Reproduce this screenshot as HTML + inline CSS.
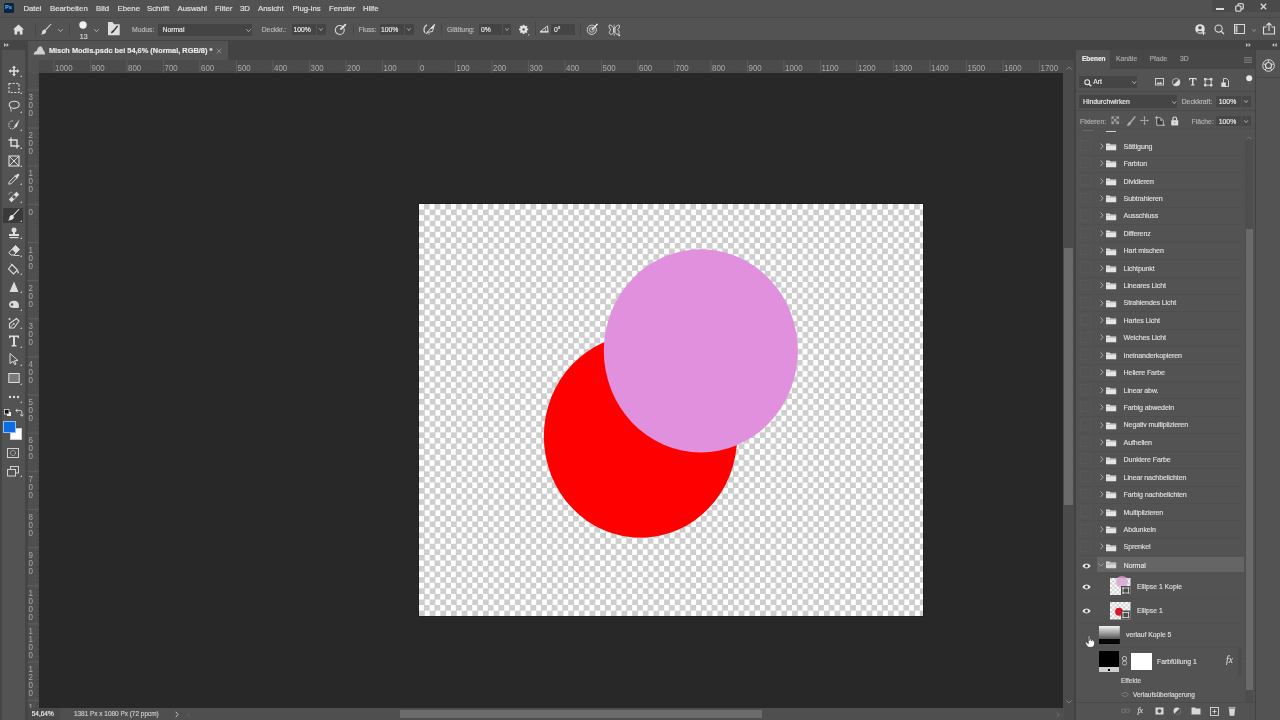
<!DOCTYPE html>
<html><head><meta charset="utf-8">
<style>
*{margin:0;padding:0;box-sizing:border-box}
html,body{width:1280px;height:720px;overflow:hidden;background:#282828;font-family:"Liberation Sans",sans-serif;color:#d6d6d6}
.a{position:absolute}
.t{position:absolute;white-space:nowrap;line-height:1;-webkit-text-stroke-width:0.18px}
#root{position:absolute;left:0;top:0;width:1280px;height:720px;will-change:transform}
svg{overflow:visible}
</style></head><body><div id="root">
<div class="a" style="left:0px;top:0px;width:1280px;height:17px;background:#525252;"></div>
<div class="a" style="left:0px;top:16.6px;width:1280px;height:1.4px;background:#484848;"></div>
<div class="a" style="left:0px;top:18px;width:1280px;height:22px;background:#535353;"></div>
<div class="a" style="left:0px;top:40px;width:1280px;height:20px;background:#434343;"></div>
<div class="a" style="left:0px;top:40px;width:28px;height:680px;background:#454545;"></div>
<div class="a" style="left:2px;top:49.6px;width:23px;height:670.4px;background:#535353;"></div>
<div class="a" style="left:27.5px;top:41px;width:200.5px;height:19px;background:#535353;"></div>
<div class="a" style="left:39px;top:73px;width:1024px;height:635px;background:#282828;"></div>
<div class="a" style="left:1063px;top:60px;width:11px;height:660px;background:#4b4b4b;"></div>
<div class="a" style="left:1064.2px;top:248px;width:8.7px;height:257px;background:#6b6b6b;"></div>
<div class="a" style="left:1074px;top:40px;width:2px;height:680px;background:#434343;"></div>
<div class="a" style="left:1076px;top:50px;width:179px;height:670px;background:#535353;"></div>
<div class="a" style="left:1255px;top:40px;width:1.3px;height:680px;background:#434343;"></div>
<div class="a" style="left:1256.3px;top:50px;width:23.7px;height:670px;background:#535353;"></div>
<div class="a" style="left:418.5px;top:203.75px;width:504.2px;height:412.35px;background:repeating-conic-gradient(#cecece 0 25%,#ffffff 0 50%) 0 0/10.667px 11.143px;box-shadow:0 0 0 0.8px #1e1e1e"></div>
<svg class="a" style="left:0;top:0" width="1280" height="720">
 <ellipse cx="640.5" cy="436.3" rx="96.7" ry="101.5" fill="#ff0000"/>
 <ellipse cx="700.8" cy="350.8" rx="97" ry="101.6" fill="#e190de"/>
</svg>
<div class="a" style="left:3.5px;top:2.5px;width:10.5px;height:10.5px;background:#0b2440;border-radius:1.5px"></div>
<div class="t" style="left:5px;top:5px;font-size:5.6px;color:#4aa8f0;font-weight:bold">Ps</div>
<div class="t" style="left:23.4px;top:5px;font-size:7.8px;color:#e0e0e0;">Datei</div>
<div class="t" style="left:50px;top:5px;font-size:7.8px;color:#e0e0e0;">Bearbeiten</div>
<div class="t" style="left:96px;top:5px;font-size:7.8px;color:#e0e0e0;">Bild</div>
<div class="t" style="left:117.5px;top:5px;font-size:7.8px;color:#e0e0e0;">Ebene</div>
<div class="t" style="left:147px;top:5px;font-size:7.8px;color:#e0e0e0;">Schrift</div>
<div class="t" style="left:177.5px;top:5px;font-size:7.8px;color:#e0e0e0;">Auswahl</div>
<div class="t" style="left:215px;top:5px;font-size:7.8px;color:#e0e0e0;">Filter</div>
<div class="t" style="left:240px;top:5px;font-size:7.8px;color:#e0e0e0;">3D</div>
<div class="t" style="left:258px;top:5px;font-size:7.8px;color:#e0e0e0;">Ansicht</div>
<div class="t" style="left:292.5px;top:5px;font-size:7.8px;color:#e0e0e0;">Plug-ins</div>
<div class="t" style="left:329px;top:5px;font-size:7.8px;color:#e0e0e0;">Fenster</div>
<div class="t" style="left:363px;top:5px;font-size:7.8px;color:#e0e0e0;">Hilfe</div>
<svg class="a" style="left:13px;top:23.5px;" width="11" height="11" viewBox="0 0 11 11"><path d="M5.5 0.5 L11 5.5 L9.5 5.5 L9.5 10.5 L6.8 10.5 L6.8 7.5 L4.2 7.5 L4.2 10.5 L1.5 10.5 L1.5 5.5 L0 5.5 Z" fill="#e0e0e0"/></svg>
<div class="a" style="left:35px;top:23px;width:1px;height:13px;background:#474747;"></div>
<svg class="a" style="left:41px;top:24px;" width="11" height="11" viewBox="0 0 11 11"><path d="M10.5 0.3 L5 6.2 L4.2 5.5 L9.8 -0.2 Z" fill="#dcdcdc"/><path d="M4.3 5.6 C2.5 5.2 1.3 6.5 1.2 8 C1.1 9.2 0.6 10 0 10.5 C2.5 10.6 4.6 9.8 5.3 7.6 Z" fill="#dcdcdc"/></svg>
<svg class="a" style="left:57.5px;top:28.5px;" width="5" height="3" viewBox="0 0 5 3"><path d="M0.3 0.3 L2.5 2.6 L4.7 0.3" stroke="#bdbdbd" stroke-width="0.9" fill="none"/></svg>
<div class="a" style="left:69px;top:23px;width:1px;height:13px;background:#474747;"></div>
<svg class="a" style="left:79.2px;top:20.6px;" width="8" height="8" viewBox="0 0 8 8"><circle cx="4" cy="4" r="3.7" fill="#f2f2f2"/></svg>
<div class="t" style="left:79.8px;top:32.6px;font-size:7px;color:#d4d4d4;">13</div>
<svg class="a" style="left:94px;top:28.5px;" width="5" height="3" viewBox="0 0 5 3"><path d="M0.3 0.3 L2.5 2.6 L4.7 0.3" stroke="#bdbdbd" stroke-width="0.9" fill="none"/></svg>
<svg class="a" style="left:108px;top:21.7px;" width="12" height="13.3" viewBox="0 0 12 13.3"><path d="M0 0 L4.5 0 L6 2.3 L11.7 2.3 L11.7 13.3 L0 13.3 Z" fill="#dedede"/><path d="M9.3 4.3 L5.3 9.2" stroke="#3a3a3a" stroke-width="1.4" stroke-linecap="round"/><path d="M5.2 8.5 C3.8 8.5 3.2 9.6 2.8 11.4 C4.5 11.2 5.8 10.6 6.1 9.3 Z" fill="#3a3a3a"/></svg>
<div class="t" style="left:132px;top:26.8px;font-size:6.8px;color:#b8b8b8;">Modus:</div>
<div class="a" style="left:158px;top:23.5px;width:94px;height:12px;background:#444444;"></div>
<div class="t" style="left:162.5px;top:26.8px;font-size:6.8px;color:#e6e6e6;">Normal</div>
<svg class="a" style="left:245.5px;top:28.7px;" width="5" height="3" viewBox="0 0 5 3"><path d="M0.3 0.3 L2.5 2.6 L4.7 0.3" stroke="#bdbdbd" stroke-width="0.9" fill="none"/></svg>
<div class="t" style="left:261.7px;top:26.8px;font-size:6.8px;color:#b8b8b8;">Deckkr.:</div>
<div class="a" style="left:291.5px;top:23.5px;width:24px;height:11px;background:#444444;"></div>
<div class="a" style="left:316.5px;top:23.5px;width:9px;height:11px;background:#444444;"></div>
<div class="t" style="left:293.5px;top:26.8px;font-size:6.8px;color:#e6e6e6;">100%</div>
<svg class="a" style="left:318.5px;top:28.2px;" width="4" height="3" viewBox="0 0 4 3"><path d="M0.3 0.3 L2.0 2.6 L3.7 0.3" stroke="#b0b0b0" stroke-width="0.9" fill="none"/></svg>
<svg class="a" style="left:334px;top:23px;" width="13" height="13" viewBox="0 0 13 13"><circle cx="5.75" cy="7" r="4.5" stroke="#d4d4d4" stroke-width="1.1" fill="none"/><path d="M6.8 6.2 L11.4 1.6" stroke="#e4e4e4" stroke-width="1.7" stroke-linecap="round"/></svg>
<div class="a" style="left:353px;top:23px;width:1px;height:13px;background:#474747;"></div>
<div class="t" style="left:358.5px;top:26.8px;font-size:6.8px;color:#b8b8b8;">Fluss:</div>
<div class="a" style="left:379.5px;top:23.5px;width:24px;height:11px;background:#444444;"></div>
<div class="a" style="left:405px;top:23.5px;width:9px;height:11px;background:#444444;"></div>
<div class="t" style="left:381px;top:26.8px;font-size:6.8px;color:#e6e6e6;">100%</div>
<svg class="a" style="left:407px;top:28.2px;" width="4" height="3" viewBox="0 0 4 3"><path d="M0.3 0.3 L2.0 2.6 L3.7 0.3" stroke="#b0b0b0" stroke-width="0.9" fill="none"/></svg>
<svg class="a" style="left:421px;top:22px;" width="15" height="14" viewBox="0 0 15 14"><path d="M6 2.8 C2.5 4.5 2.3 8.5 4 10.8" stroke="#d4d4d4" stroke-width="1.3" fill="none"/><path d="M13.5 2.3 L6 10.5 L11.5 9.5 Z" stroke="#dcdcdc" stroke-width="1" fill="none"/><path d="M13.5 2.3 L9 7 L12 6.5 Z" fill="#e6e6e6"/><circle cx="5.5" cy="11.5" r="0.8" fill="#d0d0d0"/><circle cx="8" cy="12" r="0.7" fill="#c0c0c0"/></svg>
<div class="a" style="left:441px;top:23px;width:1px;height:13px;background:#474747;"></div>
<div class="t" style="left:447px;top:26.8px;font-size:6.8px;color:#b8b8b8;">Glättung:</div>
<div class="a" style="left:478.5px;top:23.5px;width:23.5px;height:11px;background:#444444;"></div>
<div class="a" style="left:503px;top:23.5px;width:8px;height:11px;background:#444444;"></div>
<div class="t" style="left:481px;top:26.8px;font-size:6.8px;color:#e6e6e6;">0%</div>
<svg class="a" style="left:505px;top:28.2px;" width="4" height="3" viewBox="0 0 4 3"><path d="M0.3 0.3 L2.0 2.6 L3.7 0.3" stroke="#b0b0b0" stroke-width="0.9" fill="none"/></svg>
<svg class="a" style="left:518px;top:23.5px;" width="12" height="12" viewBox="0 0 12 12"><g transform="translate(5.6,5.4)"><circle r="3.3" fill="#e4e4e4"/><circle r="1.2" fill="#4a4a4a"/><rect x="-0.9" y="-4.6" width="1.8" height="2.2" fill="#e4e4e4" transform="rotate(0)"/><rect x="-0.9" y="-4.6" width="1.8" height="2.2" fill="#e4e4e4" transform="rotate(45)"/><rect x="-0.9" y="-4.6" width="1.8" height="2.2" fill="#e4e4e4" transform="rotate(90)"/><rect x="-0.9" y="-4.6" width="1.8" height="2.2" fill="#e4e4e4" transform="rotate(135)"/><rect x="-0.9" y="-4.6" width="1.8" height="2.2" fill="#e4e4e4" transform="rotate(180)"/><rect x="-0.9" y="-4.6" width="1.8" height="2.2" fill="#e4e4e4" transform="rotate(225)"/><rect x="-0.9" y="-4.6" width="1.8" height="2.2" fill="#e4e4e4" transform="rotate(270)"/><rect x="-0.9" y="-4.6" width="1.8" height="2.2" fill="#e4e4e4" transform="rotate(315)"/></g><path d="M9.8 10.6 L11.6 10.6 L10.7 11.8 Z" fill="#e0e0e0"/></svg>
<div class="a" style="left:535px;top:21px;width:1px;height:15px;background:#474747;"></div>
<svg class="a" style="left:539px;top:24.5px;" width="11" height="8" viewBox="0 0 11 8"><path d="M1 6.8 L8.5 1 L9 6.8 Z" stroke="#d8d8d8" stroke-width="1" fill="none"/><path d="M1 6.8 L9.5 6.8" stroke="#d8d8d8" stroke-width="1.4"/><path d="M5.8 3.3 Q7 5 6.5 6.8" stroke="#d8d8d8" stroke-width="0.8" fill="none"/></svg>
<div class="a" style="left:551px;top:23.5px;width:23.5px;height:11px;background:#444444;"></div>
<div class="t" style="left:554px;top:26.8px;font-size:6.8px;color:#e6e6e6;">0°</div>
<div class="a" style="left:580px;top:23px;width:1px;height:13px;background:#474747;"></div>
<svg class="a" style="left:585.5px;top:22.5px;" width="13" height="13" viewBox="0 0 13 13"><circle cx="5.8" cy="6.8" r="4.6" stroke="#d4d4d4" stroke-width="1" fill="none"/><circle cx="5.8" cy="6.8" r="2.4" stroke="#d4d4d4" stroke-width="0.9" fill="none"/><path d="M6.2 6.4 L11.2 1.2" stroke="#e4e4e4" stroke-width="1.5" stroke-linecap="round"/></svg>
<svg class="a" style="left:607.5px;top:23.5px;" width="13" height="13" viewBox="0 0 13 13"><path d="M6.25 0.5 L6.25 12" stroke="#c8c8c8" stroke-width="0.7"/><path d="M5.5 4 C4 1 1 0.5 1 1.5 C1 3.5 1.5 5 3 5.8 C1.5 6.5 1 8 1.5 9.5 C2.5 11 4.5 10.5 5.5 8.5 Z M7 4 C8.5 1 11.5 0.5 11.5 1.5 C11.5 3.5 11 5 9.5 5.8 C11 6.5 11.5 8 11 9.5 C10 11 8 10.5 7 8.5 Z" stroke="#d4d4d4" stroke-width="1" fill="none"/><circle cx="11.2" cy="11.2" r="1" fill="#e4e4e4"/></svg>
<svg class="a" style="left:1195px;top:24px;" width="11" height="11" viewBox="0 0 11 11"><circle cx="5" cy="5" r="4.8" fill="#e0e0e0"/><circle cx="5" cy="3.8" r="1.8" fill="#535353"/><path d="M1.6 8.6 C2.5 6.5 7.5 6.5 8.4 8.6" fill="#535353"/><path d="M8.5 7 L8.5 11 M6.5 9 L10.5 9" stroke="#e0e0e0" stroke-width="1"/></svg>
<svg class="a" style="left:1214px;top:24px;" width="11" height="11" viewBox="0 0 11 11"><circle cx="4.6" cy="4.6" r="3.6" stroke="#dadada" stroke-width="1.1" fill="none"/><path d="M7.2 7.2 L10 10" stroke="#dadada" stroke-width="1.3"/></svg>
<svg class="a" style="left:1234px;top:24px;" width="11" height="10" viewBox="0 0 11 10"><rect x="0.5" y="0.5" width="10" height="9" stroke="#dadada" stroke-width="1" fill="none"/><rect x="1.5" y="1.5" width="2" height="7" fill="#bdbdbd"/></svg>
<svg class="a" style="left:1252px;top:29px;" width="4" height="3" viewBox="0 0 4 3"><path d="M0.3 0.3 L2.0 2.6 L3.7 0.3" stroke="#9a9a9a" stroke-width="0.9" fill="none"/></svg>
<svg class="a" style="left:1263px;top:22px;" width="12" height="13" viewBox="0 0 12 13"><path d="M3.5 5 L0.5 5 L0.5 12 L11.5 12 L11.5 5 L8.5 5" stroke="#dedede" stroke-width="1.1" fill="none"/><path d="M6 9 L6 1 M3.5 3.5 L6 1 L8.5 3.5" stroke="#dedede" stroke-width="1.1" fill="none"/></svg>
<div class="a" style="left:1212px;top:0px;width:68px;height:12px;background:#4a4a4a;"></div>
<div class="a" style="left:1216.2px;top:7.8px;width:7.5px;height:2px;background:#d8d8d8;"></div>
<svg class="a" style="left:1234.5px;top:3px;" width="9" height="9" viewBox="0 0 9 9"><rect x="3" y="0.7" width="5.3" height="5.3" stroke="#d0d0d0" stroke-width="1.3" fill="none" rx="1.2"/><rect x="0.7" y="2.8" width="5.3" height="5.3" stroke="#d0d0d0" stroke-width="1.3" fill="#4a4a4a" rx="1.2"/></svg>
<svg class="a" style="left:1260px;top:3.2px;" width="7" height="7" viewBox="0 0 7 7"><path d="M0.8 0.8 L6.2 6.2 M6.2 0.8 L0.8 6.2" stroke="#d4d4d4" stroke-width="1.4"/></svg>
<svg class="a" style="left:33px;top:45px;" width="12.5" height="10" viewBox="0 0 12.5 10"><path d="M0.5 9.5 L1.2 7.8 C1.8 6.5 3 6 3.8 6 C4.3 3.5 5.8 1 7.5 1.2 C9 1.4 9.8 3 10 4.8 C11 5.3 12 7.5 12.2 9.5 Z" fill="#cfcfcf"/></svg>
<div class="t" style="left:48.9px;top:47px;font-size:7.4px;color:#e8e8e8;font-weight:bold">Misch Modis.psdc bei 54,6% (Normal, RGB/8) *</div>
<svg class="a" style="left:215.5px;top:48px;" width="6" height="6" viewBox="0 0 6 6"><path d="M0.7 0.7 L5.3 5.3 M5.3 0.7 L0.7 5.3" stroke="#9a9a9a" stroke-width="0.8"/></svg>
<svg class="a" style="left:4px;top:42.8px;" width="5" height="4" viewBox="0 0 5 4"><path d="M0 0 L2.2 2 L0 4 Z M2.6 0 L4.8 2 L2.6 4 Z" fill="#c8c8c8"/></svg>
<div class="a" style="left:3px;top:207.5px;width:20px;height:15.5px;background:#3a3a3a;"></div>
<svg class="a" style="left:7.5px;top:64.5px;" width="12" height="12" viewBox="0 0 12 12"><path d="M6 0.5 L8 3 L6.8 3 L6.8 5.2 L9 5.2 L9 4 L11.5 6 L9 8 L9 6.8 L6.8 6.8 L6.8 9 L8 9 L6 11.5 L4 9 L5.2 9 L5.2 6.8 L3 6.8 L3 8 L0.5 6 L3 4 L3 5.2 L5.2 5.2 L5.2 3 L4 3 Z" fill="#dcdcdc"/></svg>
<svg class="a" style="left:19.5px;top:75.0px;" width="2" height="2" viewBox="0 0 2 2"><path d="M2 0 L2 2 L0 2 Z" fill="#bdbdbd"/></svg>
<svg class="a" style="left:7.5px;top:81.5px;" width="12" height="12" viewBox="0 0 12 12"><rect x="1" y="1.5" width="10" height="9" stroke="#dcdcdc" stroke-width="1.1" fill="none" stroke-dasharray="2.2 1.4"/></svg>
<svg class="a" style="left:19.5px;top:92.0px;" width="2" height="2" viewBox="0 0 2 2"><path d="M2 0 L2 2 L0 2 Z" fill="#bdbdbd"/></svg>
<svg class="a" style="left:7.5px;top:100.0px;" width="12" height="12" viewBox="0 0 12 12"><ellipse cx="6.2" cy="4.8" rx="5" ry="3.6" stroke="#dcdcdc" stroke-width="1.1" fill="none"/><path d="M2.8 7.5 C2.2 9 3.5 9.5 3 11.5" stroke="#dcdcdc" stroke-width="1" fill="none"/></svg>
<svg class="a" style="left:19.5px;top:110.5px;" width="2" height="2" viewBox="0 0 2 2"><path d="M2 0 L2 2 L0 2 Z" fill="#bdbdbd"/></svg>
<svg class="a" style="left:7.5px;top:118.5px;" width="12" height="12" viewBox="0 0 12 12"><path d="M5 2 C1.5 1 0 5 1.2 8 C2.2 10.2 5 10.5 6 9" stroke="#dcdcdc" stroke-width="0.9" fill="none" stroke-dasharray="1.5 1"/><path d="M11.5 0.5 L7 6 L5.5 10 L9 7.2 Z" fill="#dcdcdc"/></svg>
<svg class="a" style="left:19.5px;top:129.0px;" width="2" height="2" viewBox="0 0 2 2"><path d="M2 0 L2 2 L0 2 Z" fill="#bdbdbd"/></svg>
<svg class="a" style="left:7.5px;top:136.5px;" width="12" height="12" viewBox="0 0 12 12"><path d="M3 0.5 L3 9 L11.5 9 M0.5 3 L9 3 L9 11.5" stroke="#dcdcdc" stroke-width="1.4" fill="none"/></svg>
<svg class="a" style="left:19.5px;top:147.0px;" width="2" height="2" viewBox="0 0 2 2"><path d="M2 0 L2 2 L0 2 Z" fill="#bdbdbd"/></svg>
<svg class="a" style="left:7.5px;top:154.5px;" width="12" height="12" viewBox="0 0 12 12"><rect x="1" y="1" width="10" height="10" stroke="#dcdcdc" stroke-width="1.1" fill="none"/><path d="M1 1 L11 11 M11 1 L1 11" stroke="#dcdcdc" stroke-width="1"/></svg>
<svg class="a" style="left:19.5px;top:165.0px;" width="2" height="2" viewBox="0 0 2 2"><path d="M2 0 L2 2 L0 2 Z" fill="#bdbdbd"/></svg>
<svg class="a" style="left:7.5px;top:172.5px;" width="12" height="12" viewBox="0 0 12 12"><path d="M0.8 11.2 L1.2 9 L7 3.2 L8.8 5 L3 10.8 Z" stroke="#dcdcdc" stroke-width="1" fill="none"/><path d="M6.5 2.8 L9.2 5.5 L10 4.7 L9.5 4.2 L11 2.7 C12 1.5 10.5 0 9.3 1 L7.8 2.5 L7.3 2 Z" fill="#dcdcdc"/></svg>
<svg class="a" style="left:19.5px;top:183.0px;" width="2" height="2" viewBox="0 0 2 2"><path d="M2 0 L2 2 L0 2 Z" fill="#bdbdbd"/></svg>
<svg class="a" style="left:7.5px;top:190.5px;" width="12" height="12" viewBox="0 0 12 12"><path d="M8.5 0.8 L11.2 3.5 L3.5 11.2 L0.8 8.5 Z" fill="#dcdcdc"/><rect x="4.5" y="4.5" width="3" height="3" transform="rotate(45 6 6)" fill="#535353"/><path d="M1 3.5 C1 1 3.5 0.5 4.5 2" stroke="#dcdcdc" stroke-width="0.8" fill="none" stroke-dasharray="1 0.8"/></svg>
<svg class="a" style="left:19.5px;top:201.0px;" width="2" height="2" viewBox="0 0 2 2"><path d="M2 0 L2 2 L0 2 Z" fill="#bdbdbd"/></svg>
<svg class="a" style="left:7.5px;top:209.0px;" width="12" height="12" viewBox="0 0 12 12"><path d="M11.5 0.3 L5.6 6.8 L4.8 6 L10.8 -0.3 Z" fill="#e6e6e6"/><path d="M4.9 6.1 C2.8 5.7 1.5 7.1 1.4 8.7 C1.3 10 0.7 10.9 0 11.4 C2.8 11.5 5.2 10.6 6 8.2 Z" fill="#e6e6e6"/></svg>
<svg class="a" style="left:19.5px;top:219.5px;" width="2" height="2" viewBox="0 0 2 2"><path d="M2 0 L2 2 L0 2 Z" fill="#bdbdbd"/></svg>
<svg class="a" style="left:7.5px;top:226.5px;" width="12" height="12" viewBox="0 0 12 12"><circle cx="6" cy="3" r="2.5" fill="#dcdcdc"/><rect x="5" y="4" width="2" height="3" fill="#dcdcdc"/><path d="M1 7 L11 7 L11 9 L1 9 Z" fill="#dcdcdc"/><rect x="1.5" y="10" width="9" height="1.2" fill="#dcdcdc"/></svg>
<svg class="a" style="left:19.5px;top:237.0px;" width="2" height="2" viewBox="0 0 2 2"><path d="M2 0 L2 2 L0 2 Z" fill="#bdbdbd"/></svg>
<svg class="a" style="left:7.5px;top:244.5px;" width="12" height="12" viewBox="0 0 12 12"><path d="M7.5 0.5 L11.5 4.5 L6 10 L3 10 L0.8 7.8 Z" stroke="#dcdcdc" stroke-width="1" fill="none"/><path d="M7.5 0.5 L11.5 4.5 L7.8 8.2 L3.8 4.2 Z" fill="#dcdcdc"/><path d="M6 10.5 L11.5 10.5" stroke="#dcdcdc" stroke-width="0.9"/></svg>
<svg class="a" style="left:19.5px;top:255.0px;" width="2" height="2" viewBox="0 0 2 2"><path d="M2 0 L2 2 L0 2 Z" fill="#bdbdbd"/></svg>
<svg class="a" style="left:7.5px;top:262.5px;" width="12" height="12" viewBox="0 0 12 12"><path d="M4 1.5 L9.5 7 L5.5 11 L0.5 6 Z" stroke="#dcdcdc" stroke-width="1.1" fill="none"/><path d="M2.5 0.5 L6 4" stroke="#dcdcdc" stroke-width="0.9"/><path d="M9.5 7 C10.5 8 11.5 9.5 10.5 10.5 C9.8 11 9 10 9.5 7 Z" fill="#dcdcdc"/></svg>
<svg class="a" style="left:19.5px;top:273.0px;" width="2" height="2" viewBox="0 0 2 2"><path d="M2 0 L2 2 L0 2 Z" fill="#bdbdbd"/></svg>
<svg class="a" style="left:7.5px;top:280.5px;" width="12" height="12" viewBox="0 0 12 12"><path d="M6 0.5 L10.5 11 L1.5 11 Z" fill="#dcdcdc"/></svg>
<svg class="a" style="left:19.5px;top:291.0px;" width="2" height="2" viewBox="0 0 2 2"><path d="M2 0 L2 2 L0 2 Z" fill="#bdbdbd"/></svg>
<svg class="a" style="left:7.5px;top:298.5px;" width="12" height="12" viewBox="0 0 12 12"><path d="M1 5.5 C1 2 5 1 8 2 C10.5 3 11.5 6 10.5 9 L6 9 C3 9 1 8 1 5.5 Z" fill="#dcdcdc"/><circle cx="4" cy="5.5" r="1.3" fill="#535353"/></svg>
<svg class="a" style="left:19.5px;top:309.0px;" width="2" height="2" viewBox="0 0 2 2"><path d="M2 0 L2 2 L0 2 Z" fill="#bdbdbd"/></svg>
<svg class="a" style="left:7.5px;top:316.5px;" width="12" height="12" viewBox="0 0 12 12"><path d="M8.5 1.5 L11 4 L9.5 6 L6 11 L1.5 11 L1.5 6.5 L6.5 3 Z" stroke="#dcdcdc" stroke-width="1.1" fill="none"/><path d="M2 10.5 L5.5 7" stroke="#dcdcdc" stroke-width="0.8"/><circle cx="5.8" cy="6.8" r="0.9" fill="#dcdcdc"/><circle cx="1.5" cy="2" r="1" fill="#dcdcdc"/></svg>
<svg class="a" style="left:19.5px;top:327.0px;" width="2" height="2" viewBox="0 0 2 2"><path d="M2 0 L2 2 L0 2 Z" fill="#bdbdbd"/></svg>
<svg class="a" style="left:7.5px;top:335.0px;" width="12" height="12" viewBox="0 0 12 12"><path d="M1 0.5 L11 0.5 L11 3.3 L9.8 3.3 L9.5 2 L7 2 L7 10 L8.5 10.3 L8.5 11.5 L3.5 11.5 L3.5 10.3 L5 10 L5 2 L2.5 2 L2.2 3.3 L1 3.3 Z" fill="#dcdcdc"/></svg>
<svg class="a" style="left:19.5px;top:345.5px;" width="2" height="2" viewBox="0 0 2 2"><path d="M2 0 L2 2 L0 2 Z" fill="#bdbdbd"/></svg>
<svg class="a" style="left:7.5px;top:353.0px;" width="12" height="12" viewBox="0 0 12 12"><path d="M2 0.5 L10 7.5 L6.5 7.8 L8 11 L6.6 11.6 L5.1 8.3 L2 10.5 Z" stroke="#dcdcdc" stroke-width="1" fill="none"/></svg>
<svg class="a" style="left:19.5px;top:363.5px;" width="2" height="2" viewBox="0 0 2 2"><path d="M2 0 L2 2 L0 2 Z" fill="#bdbdbd"/></svg>
<svg class="a" style="left:7.5px;top:372.0px;" width="12" height="12" viewBox="0 0 12 12"><rect x="0.8" y="1.5" width="10.4" height="9" stroke="#dcdcdc" stroke-width="1" fill="#7a7a7a"/></svg>
<svg class="a" style="left:19.5px;top:382.5px;" width="2" height="2" viewBox="0 0 2 2"><path d="M2 0 L2 2 L0 2 Z" fill="#bdbdbd"/></svg>
<svg class="a" style="left:7.5px;top:390.5px;" width="12" height="12" viewBox="0 0 12 12"><circle cx="2" cy="6" r="1.2" fill="#dcdcdc"/><circle cx="6" cy="6" r="1.2" fill="#dcdcdc"/><circle cx="10" cy="6" r="1.2" fill="#dcdcdc"/></svg>
<svg class="a" style="left:19.5px;top:401.0px;" width="2" height="2" viewBox="0 0 2 2"><path d="M2 0 L2 2 L0 2 Z" fill="#bdbdbd"/></svg>
<svg class="a" style="left:4px;top:409px;" width="8" height="8" viewBox="0 0 8 8"><rect x="2.5" y="2.5" width="5" height="5" fill="#f0f0f0" stroke="#222" stroke-width="0.6"/><rect x="0.5" y="0.5" width="4.5" height="4.5" fill="#111" stroke="#e0e0e0" stroke-width="0.8"/></svg>
<svg class="a" style="left:15px;top:408px;" width="8" height="9" viewBox="0 0 8 9"><path d="M1 2.5 L5.5 2.5 Q6.8 2.5 6.8 4 L6.8 8" stroke="#d8d8d8" stroke-width="0.9" fill="none"/><path d="M2.5 0.8 L0.8 2.5 L2.5 4.2 M5 6.5 L6.8 8.3 L8.5 6.5" stroke="#d8d8d8" stroke-width="0.9" fill="none"/></svg>
<div class="a" style="left:10px;top:428px;width:12px;height:12px;background:#ffffff;border:1px solid #cfcfcf"></div>
<div class="a" style="left:3px;top:420.8px;width:12.5px;height:12.5px;background:#0b6ce6;border:1px solid #8cc0f0"></div>
<svg class="a" style="left:7px;top:448px;" width="12" height="10" viewBox="0 0 12 10"><rect x="0.5" y="0.5" width="11" height="9" stroke="#d0d0d0" stroke-width="1" fill="none"/><circle cx="6" cy="5" r="2.5" stroke="#d0d0d0" stroke-width="0.9" fill="none" stroke-dasharray="1.2 0.8"/></svg>
<svg class="a" style="left:7px;top:466px;" width="12" height="11" viewBox="0 0 12 11"><rect x="3.5" y="0.5" width="8" height="6.5" stroke="#d0d0d0" stroke-width="1" fill="none"/><rect x="0.5" y="3.5" width="8" height="6.5" stroke="#d0d0d0" stroke-width="1" fill="#535353"/></svg>
<svg class="a" style="left:19.5px;top:475px;" width="2" height="2" viewBox="0 0 2 2"><path d="M2 0 L2 2 L0 2 Z" fill="#bdbdbd"/></svg>
<div class="a" style="left:39px;top:60px;width:1024px;height:12.5px;background:#4b4b4b;"></div>
<div class="a" style="left:27.5px;top:72.5px;width:11px;height:635.5px;background:#4f4f4f;"></div>
<div class="a" style="left:27.5px;top:60px;width:11px;height:12.5px;background:#525252;"></div>
<svg class="a" style="left:0;top:0" width="1280" height="720"><rect x="0" y="0" width="1280" height="720" fill="none"/><path d="M39.30 71.0 L39.30 72.5" stroke="#3f3f3f" stroke-width="0.7"/><path d="M42.95 71.0 L42.95 72.5" stroke="#3f3f3f" stroke-width="0.7"/><path d="M46.60 71.0 L46.60 72.5" stroke="#3f3f3f" stroke-width="0.7"/><path d="M50.25 71.0 L50.25 72.5" stroke="#3f3f3f" stroke-width="0.7"/><path d="M53.90 60 L53.90 72.5" stroke="#656565" stroke-width="0.8"/><text x="55.10" y="0" transform="translate(0 71.2) scale(1 1.22)" font-size="7.9" fill="#aaaaaa" font-family="Liberation Sans">1000</text><path d="M57.55 71.0 L57.55 72.5" stroke="#3f3f3f" stroke-width="0.7"/><path d="M61.20 71.0 L61.20 72.5" stroke="#3f3f3f" stroke-width="0.7"/><path d="M64.85 71.0 L64.85 72.5" stroke="#3f3f3f" stroke-width="0.7"/><path d="M68.50 71.0 L68.50 72.5" stroke="#3f3f3f" stroke-width="0.7"/><path d="M72.15 70.0 L72.15 72.5" stroke="#3f3f3f" stroke-width="0.7"/><path d="M75.80 71.0 L75.80 72.5" stroke="#3f3f3f" stroke-width="0.7"/><path d="M79.45 71.0 L79.45 72.5" stroke="#3f3f3f" stroke-width="0.7"/><path d="M83.10 71.0 L83.10 72.5" stroke="#3f3f3f" stroke-width="0.7"/><path d="M86.75 71.0 L86.75 72.5" stroke="#3f3f3f" stroke-width="0.7"/><path d="M90.40 60 L90.40 72.5" stroke="#656565" stroke-width="0.8"/><text x="91.60" y="0" transform="translate(0 71.2) scale(1 1.22)" font-size="7.9" fill="#aaaaaa" font-family="Liberation Sans">900</text><path d="M94.05 71.0 L94.05 72.5" stroke="#3f3f3f" stroke-width="0.7"/><path d="M97.70 71.0 L97.70 72.5" stroke="#3f3f3f" stroke-width="0.7"/><path d="M101.35 71.0 L101.35 72.5" stroke="#3f3f3f" stroke-width="0.7"/><path d="M105.00 71.0 L105.00 72.5" stroke="#3f3f3f" stroke-width="0.7"/><path d="M108.65 70.0 L108.65 72.5" stroke="#3f3f3f" stroke-width="0.7"/><path d="M112.30 71.0 L112.30 72.5" stroke="#3f3f3f" stroke-width="0.7"/><path d="M115.95 71.0 L115.95 72.5" stroke="#3f3f3f" stroke-width="0.7"/><path d="M119.60 71.0 L119.60 72.5" stroke="#3f3f3f" stroke-width="0.7"/><path d="M123.25 71.0 L123.25 72.5" stroke="#3f3f3f" stroke-width="0.7"/><path d="M126.90 60 L126.90 72.5" stroke="#656565" stroke-width="0.8"/><text x="128.10" y="0" transform="translate(0 71.2) scale(1 1.22)" font-size="7.9" fill="#aaaaaa" font-family="Liberation Sans">800</text><path d="M130.55 71.0 L130.55 72.5" stroke="#3f3f3f" stroke-width="0.7"/><path d="M134.20 71.0 L134.20 72.5" stroke="#3f3f3f" stroke-width="0.7"/><path d="M137.85 71.0 L137.85 72.5" stroke="#3f3f3f" stroke-width="0.7"/><path d="M141.50 71.0 L141.50 72.5" stroke="#3f3f3f" stroke-width="0.7"/><path d="M145.15 70.0 L145.15 72.5" stroke="#3f3f3f" stroke-width="0.7"/><path d="M148.80 71.0 L148.80 72.5" stroke="#3f3f3f" stroke-width="0.7"/><path d="M152.45 71.0 L152.45 72.5" stroke="#3f3f3f" stroke-width="0.7"/><path d="M156.10 71.0 L156.10 72.5" stroke="#3f3f3f" stroke-width="0.7"/><path d="M159.75 71.0 L159.75 72.5" stroke="#3f3f3f" stroke-width="0.7"/><path d="M163.40 60 L163.40 72.5" stroke="#656565" stroke-width="0.8"/><text x="164.60" y="0" transform="translate(0 71.2) scale(1 1.22)" font-size="7.9" fill="#aaaaaa" font-family="Liberation Sans">700</text><path d="M167.05 71.0 L167.05 72.5" stroke="#3f3f3f" stroke-width="0.7"/><path d="M170.70 71.0 L170.70 72.5" stroke="#3f3f3f" stroke-width="0.7"/><path d="M174.35 71.0 L174.35 72.5" stroke="#3f3f3f" stroke-width="0.7"/><path d="M178.00 71.0 L178.00 72.5" stroke="#3f3f3f" stroke-width="0.7"/><path d="M181.65 70.0 L181.65 72.5" stroke="#3f3f3f" stroke-width="0.7"/><path d="M185.30 71.0 L185.30 72.5" stroke="#3f3f3f" stroke-width="0.7"/><path d="M188.95 71.0 L188.95 72.5" stroke="#3f3f3f" stroke-width="0.7"/><path d="M192.60 71.0 L192.60 72.5" stroke="#3f3f3f" stroke-width="0.7"/><path d="M196.25 71.0 L196.25 72.5" stroke="#3f3f3f" stroke-width="0.7"/><path d="M199.90 60 L199.90 72.5" stroke="#656565" stroke-width="0.8"/><text x="201.10" y="0" transform="translate(0 71.2) scale(1 1.22)" font-size="7.9" fill="#aaaaaa" font-family="Liberation Sans">600</text><path d="M203.55 71.0 L203.55 72.5" stroke="#3f3f3f" stroke-width="0.7"/><path d="M207.20 71.0 L207.20 72.5" stroke="#3f3f3f" stroke-width="0.7"/><path d="M210.85 71.0 L210.85 72.5" stroke="#3f3f3f" stroke-width="0.7"/><path d="M214.50 71.0 L214.50 72.5" stroke="#3f3f3f" stroke-width="0.7"/><path d="M218.15 70.0 L218.15 72.5" stroke="#3f3f3f" stroke-width="0.7"/><path d="M221.80 71.0 L221.80 72.5" stroke="#3f3f3f" stroke-width="0.7"/><path d="M225.45 71.0 L225.45 72.5" stroke="#3f3f3f" stroke-width="0.7"/><path d="M229.10 71.0 L229.10 72.5" stroke="#3f3f3f" stroke-width="0.7"/><path d="M232.75 71.0 L232.75 72.5" stroke="#3f3f3f" stroke-width="0.7"/><path d="M236.40 60 L236.40 72.5" stroke="#656565" stroke-width="0.8"/><text x="237.60" y="0" transform="translate(0 71.2) scale(1 1.22)" font-size="7.9" fill="#aaaaaa" font-family="Liberation Sans">500</text><path d="M240.05 71.0 L240.05 72.5" stroke="#3f3f3f" stroke-width="0.7"/><path d="M243.70 71.0 L243.70 72.5" stroke="#3f3f3f" stroke-width="0.7"/><path d="M247.35 71.0 L247.35 72.5" stroke="#3f3f3f" stroke-width="0.7"/><path d="M251.00 71.0 L251.00 72.5" stroke="#3f3f3f" stroke-width="0.7"/><path d="M254.65 70.0 L254.65 72.5" stroke="#3f3f3f" stroke-width="0.7"/><path d="M258.30 71.0 L258.30 72.5" stroke="#3f3f3f" stroke-width="0.7"/><path d="M261.95 71.0 L261.95 72.5" stroke="#3f3f3f" stroke-width="0.7"/><path d="M265.60 71.0 L265.60 72.5" stroke="#3f3f3f" stroke-width="0.7"/><path d="M269.25 71.0 L269.25 72.5" stroke="#3f3f3f" stroke-width="0.7"/><path d="M272.90 60 L272.90 72.5" stroke="#656565" stroke-width="0.8"/><text x="274.10" y="0" transform="translate(0 71.2) scale(1 1.22)" font-size="7.9" fill="#aaaaaa" font-family="Liberation Sans">400</text><path d="M276.55 71.0 L276.55 72.5" stroke="#3f3f3f" stroke-width="0.7"/><path d="M280.20 71.0 L280.20 72.5" stroke="#3f3f3f" stroke-width="0.7"/><path d="M283.85 71.0 L283.85 72.5" stroke="#3f3f3f" stroke-width="0.7"/><path d="M287.50 71.0 L287.50 72.5" stroke="#3f3f3f" stroke-width="0.7"/><path d="M291.15 70.0 L291.15 72.5" stroke="#3f3f3f" stroke-width="0.7"/><path d="M294.80 71.0 L294.80 72.5" stroke="#3f3f3f" stroke-width="0.7"/><path d="M298.45 71.0 L298.45 72.5" stroke="#3f3f3f" stroke-width="0.7"/><path d="M302.10 71.0 L302.10 72.5" stroke="#3f3f3f" stroke-width="0.7"/><path d="M305.75 71.0 L305.75 72.5" stroke="#3f3f3f" stroke-width="0.7"/><path d="M309.40 60 L309.40 72.5" stroke="#656565" stroke-width="0.8"/><text x="310.60" y="0" transform="translate(0 71.2) scale(1 1.22)" font-size="7.9" fill="#aaaaaa" font-family="Liberation Sans">300</text><path d="M313.05 71.0 L313.05 72.5" stroke="#3f3f3f" stroke-width="0.7"/><path d="M316.70 71.0 L316.70 72.5" stroke="#3f3f3f" stroke-width="0.7"/><path d="M320.35 71.0 L320.35 72.5" stroke="#3f3f3f" stroke-width="0.7"/><path d="M324.00 71.0 L324.00 72.5" stroke="#3f3f3f" stroke-width="0.7"/><path d="M327.65 70.0 L327.65 72.5" stroke="#3f3f3f" stroke-width="0.7"/><path d="M331.30 71.0 L331.30 72.5" stroke="#3f3f3f" stroke-width="0.7"/><path d="M334.95 71.0 L334.95 72.5" stroke="#3f3f3f" stroke-width="0.7"/><path d="M338.60 71.0 L338.60 72.5" stroke="#3f3f3f" stroke-width="0.7"/><path d="M342.25 71.0 L342.25 72.5" stroke="#3f3f3f" stroke-width="0.7"/><path d="M345.90 60 L345.90 72.5" stroke="#656565" stroke-width="0.8"/><text x="347.10" y="0" transform="translate(0 71.2) scale(1 1.22)" font-size="7.9" fill="#aaaaaa" font-family="Liberation Sans">200</text><path d="M349.55 71.0 L349.55 72.5" stroke="#3f3f3f" stroke-width="0.7"/><path d="M353.20 71.0 L353.20 72.5" stroke="#3f3f3f" stroke-width="0.7"/><path d="M356.85 71.0 L356.85 72.5" stroke="#3f3f3f" stroke-width="0.7"/><path d="M360.50 71.0 L360.50 72.5" stroke="#3f3f3f" stroke-width="0.7"/><path d="M364.15 70.0 L364.15 72.5" stroke="#3f3f3f" stroke-width="0.7"/><path d="M367.80 71.0 L367.80 72.5" stroke="#3f3f3f" stroke-width="0.7"/><path d="M371.45 71.0 L371.45 72.5" stroke="#3f3f3f" stroke-width="0.7"/><path d="M375.10 71.0 L375.10 72.5" stroke="#3f3f3f" stroke-width="0.7"/><path d="M378.75 71.0 L378.75 72.5" stroke="#3f3f3f" stroke-width="0.7"/><path d="M382.40 60 L382.40 72.5" stroke="#656565" stroke-width="0.8"/><text x="383.60" y="0" transform="translate(0 71.2) scale(1 1.22)" font-size="7.9" fill="#aaaaaa" font-family="Liberation Sans">100</text><path d="M386.05 71.0 L386.05 72.5" stroke="#3f3f3f" stroke-width="0.7"/><path d="M389.70 71.0 L389.70 72.5" stroke="#3f3f3f" stroke-width="0.7"/><path d="M393.35 71.0 L393.35 72.5" stroke="#3f3f3f" stroke-width="0.7"/><path d="M397.00 71.0 L397.00 72.5" stroke="#3f3f3f" stroke-width="0.7"/><path d="M400.65 70.0 L400.65 72.5" stroke="#3f3f3f" stroke-width="0.7"/><path d="M404.30 71.0 L404.30 72.5" stroke="#3f3f3f" stroke-width="0.7"/><path d="M407.95 71.0 L407.95 72.5" stroke="#3f3f3f" stroke-width="0.7"/><path d="M411.60 71.0 L411.60 72.5" stroke="#3f3f3f" stroke-width="0.7"/><path d="M415.25 71.0 L415.25 72.5" stroke="#3f3f3f" stroke-width="0.7"/><path d="M418.90 60 L418.90 72.5" stroke="#656565" stroke-width="0.8"/><text x="420.10" y="0" transform="translate(0 71.2) scale(1 1.22)" font-size="7.9" fill="#aaaaaa" font-family="Liberation Sans">0</text><path d="M422.55 71.0 L422.55 72.5" stroke="#3f3f3f" stroke-width="0.7"/><path d="M426.20 71.0 L426.20 72.5" stroke="#3f3f3f" stroke-width="0.7"/><path d="M429.85 71.0 L429.85 72.5" stroke="#3f3f3f" stroke-width="0.7"/><path d="M433.50 71.0 L433.50 72.5" stroke="#3f3f3f" stroke-width="0.7"/><path d="M437.15 70.0 L437.15 72.5" stroke="#3f3f3f" stroke-width="0.7"/><path d="M440.80 71.0 L440.80 72.5" stroke="#3f3f3f" stroke-width="0.7"/><path d="M444.45 71.0 L444.45 72.5" stroke="#3f3f3f" stroke-width="0.7"/><path d="M448.10 71.0 L448.10 72.5" stroke="#3f3f3f" stroke-width="0.7"/><path d="M451.75 71.0 L451.75 72.5" stroke="#3f3f3f" stroke-width="0.7"/><path d="M455.40 60 L455.40 72.5" stroke="#656565" stroke-width="0.8"/><text x="456.60" y="0" transform="translate(0 71.2) scale(1 1.22)" font-size="7.9" fill="#aaaaaa" font-family="Liberation Sans">100</text><path d="M459.05 71.0 L459.05 72.5" stroke="#3f3f3f" stroke-width="0.7"/><path d="M462.70 71.0 L462.70 72.5" stroke="#3f3f3f" stroke-width="0.7"/><path d="M466.35 71.0 L466.35 72.5" stroke="#3f3f3f" stroke-width="0.7"/><path d="M470.00 71.0 L470.00 72.5" stroke="#3f3f3f" stroke-width="0.7"/><path d="M473.65 70.0 L473.65 72.5" stroke="#3f3f3f" stroke-width="0.7"/><path d="M477.30 71.0 L477.30 72.5" stroke="#3f3f3f" stroke-width="0.7"/><path d="M480.95 71.0 L480.95 72.5" stroke="#3f3f3f" stroke-width="0.7"/><path d="M484.60 71.0 L484.60 72.5" stroke="#3f3f3f" stroke-width="0.7"/><path d="M488.25 71.0 L488.25 72.5" stroke="#3f3f3f" stroke-width="0.7"/><path d="M491.90 60 L491.90 72.5" stroke="#656565" stroke-width="0.8"/><text x="493.10" y="0" transform="translate(0 71.2) scale(1 1.22)" font-size="7.9" fill="#aaaaaa" font-family="Liberation Sans">200</text><path d="M495.55 71.0 L495.55 72.5" stroke="#3f3f3f" stroke-width="0.7"/><path d="M499.20 71.0 L499.20 72.5" stroke="#3f3f3f" stroke-width="0.7"/><path d="M502.85 71.0 L502.85 72.5" stroke="#3f3f3f" stroke-width="0.7"/><path d="M506.50 71.0 L506.50 72.5" stroke="#3f3f3f" stroke-width="0.7"/><path d="M510.15 70.0 L510.15 72.5" stroke="#3f3f3f" stroke-width="0.7"/><path d="M513.80 71.0 L513.80 72.5" stroke="#3f3f3f" stroke-width="0.7"/><path d="M517.45 71.0 L517.45 72.5" stroke="#3f3f3f" stroke-width="0.7"/><path d="M521.10 71.0 L521.10 72.5" stroke="#3f3f3f" stroke-width="0.7"/><path d="M524.75 71.0 L524.75 72.5" stroke="#3f3f3f" stroke-width="0.7"/><path d="M528.40 60 L528.40 72.5" stroke="#656565" stroke-width="0.8"/><text x="529.60" y="0" transform="translate(0 71.2) scale(1 1.22)" font-size="7.9" fill="#aaaaaa" font-family="Liberation Sans">300</text><path d="M532.05 71.0 L532.05 72.5" stroke="#3f3f3f" stroke-width="0.7"/><path d="M535.70 71.0 L535.70 72.5" stroke="#3f3f3f" stroke-width="0.7"/><path d="M539.35 71.0 L539.35 72.5" stroke="#3f3f3f" stroke-width="0.7"/><path d="M543.00 71.0 L543.00 72.5" stroke="#3f3f3f" stroke-width="0.7"/><path d="M546.65 70.0 L546.65 72.5" stroke="#3f3f3f" stroke-width="0.7"/><path d="M550.30 71.0 L550.30 72.5" stroke="#3f3f3f" stroke-width="0.7"/><path d="M553.95 71.0 L553.95 72.5" stroke="#3f3f3f" stroke-width="0.7"/><path d="M557.60 71.0 L557.60 72.5" stroke="#3f3f3f" stroke-width="0.7"/><path d="M561.25 71.0 L561.25 72.5" stroke="#3f3f3f" stroke-width="0.7"/><path d="M564.90 60 L564.90 72.5" stroke="#656565" stroke-width="0.8"/><text x="566.10" y="0" transform="translate(0 71.2) scale(1 1.22)" font-size="7.9" fill="#aaaaaa" font-family="Liberation Sans">400</text><path d="M568.55 71.0 L568.55 72.5" stroke="#3f3f3f" stroke-width="0.7"/><path d="M572.20 71.0 L572.20 72.5" stroke="#3f3f3f" stroke-width="0.7"/><path d="M575.85 71.0 L575.85 72.5" stroke="#3f3f3f" stroke-width="0.7"/><path d="M579.50 71.0 L579.50 72.5" stroke="#3f3f3f" stroke-width="0.7"/><path d="M583.15 70.0 L583.15 72.5" stroke="#3f3f3f" stroke-width="0.7"/><path d="M586.80 71.0 L586.80 72.5" stroke="#3f3f3f" stroke-width="0.7"/><path d="M590.45 71.0 L590.45 72.5" stroke="#3f3f3f" stroke-width="0.7"/><path d="M594.10 71.0 L594.10 72.5" stroke="#3f3f3f" stroke-width="0.7"/><path d="M597.75 71.0 L597.75 72.5" stroke="#3f3f3f" stroke-width="0.7"/><path d="M601.40 60 L601.40 72.5" stroke="#656565" stroke-width="0.8"/><text x="602.60" y="0" transform="translate(0 71.2) scale(1 1.22)" font-size="7.9" fill="#aaaaaa" font-family="Liberation Sans">500</text><path d="M605.05 71.0 L605.05 72.5" stroke="#3f3f3f" stroke-width="0.7"/><path d="M608.70 71.0 L608.70 72.5" stroke="#3f3f3f" stroke-width="0.7"/><path d="M612.35 71.0 L612.35 72.5" stroke="#3f3f3f" stroke-width="0.7"/><path d="M616.00 71.0 L616.00 72.5" stroke="#3f3f3f" stroke-width="0.7"/><path d="M619.65 70.0 L619.65 72.5" stroke="#3f3f3f" stroke-width="0.7"/><path d="M623.30 71.0 L623.30 72.5" stroke="#3f3f3f" stroke-width="0.7"/><path d="M626.95 71.0 L626.95 72.5" stroke="#3f3f3f" stroke-width="0.7"/><path d="M630.60 71.0 L630.60 72.5" stroke="#3f3f3f" stroke-width="0.7"/><path d="M634.25 71.0 L634.25 72.5" stroke="#3f3f3f" stroke-width="0.7"/><path d="M637.90 60 L637.90 72.5" stroke="#656565" stroke-width="0.8"/><text x="639.10" y="0" transform="translate(0 71.2) scale(1 1.22)" font-size="7.9" fill="#aaaaaa" font-family="Liberation Sans">600</text><path d="M641.55 71.0 L641.55 72.5" stroke="#3f3f3f" stroke-width="0.7"/><path d="M645.20 71.0 L645.20 72.5" stroke="#3f3f3f" stroke-width="0.7"/><path d="M648.85 71.0 L648.85 72.5" stroke="#3f3f3f" stroke-width="0.7"/><path d="M652.50 71.0 L652.50 72.5" stroke="#3f3f3f" stroke-width="0.7"/><path d="M656.15 70.0 L656.15 72.5" stroke="#3f3f3f" stroke-width="0.7"/><path d="M659.80 71.0 L659.80 72.5" stroke="#3f3f3f" stroke-width="0.7"/><path d="M663.45 71.0 L663.45 72.5" stroke="#3f3f3f" stroke-width="0.7"/><path d="M667.10 71.0 L667.10 72.5" stroke="#3f3f3f" stroke-width="0.7"/><path d="M670.75 71.0 L670.75 72.5" stroke="#3f3f3f" stroke-width="0.7"/><path d="M674.40 60 L674.40 72.5" stroke="#656565" stroke-width="0.8"/><text x="675.60" y="0" transform="translate(0 71.2) scale(1 1.22)" font-size="7.9" fill="#aaaaaa" font-family="Liberation Sans">700</text><path d="M678.05 71.0 L678.05 72.5" stroke="#3f3f3f" stroke-width="0.7"/><path d="M681.70 71.0 L681.70 72.5" stroke="#3f3f3f" stroke-width="0.7"/><path d="M685.35 71.0 L685.35 72.5" stroke="#3f3f3f" stroke-width="0.7"/><path d="M689.00 71.0 L689.00 72.5" stroke="#3f3f3f" stroke-width="0.7"/><path d="M692.65 70.0 L692.65 72.5" stroke="#3f3f3f" stroke-width="0.7"/><path d="M696.30 71.0 L696.30 72.5" stroke="#3f3f3f" stroke-width="0.7"/><path d="M699.95 71.0 L699.95 72.5" stroke="#3f3f3f" stroke-width="0.7"/><path d="M703.60 71.0 L703.60 72.5" stroke="#3f3f3f" stroke-width="0.7"/><path d="M707.25 71.0 L707.25 72.5" stroke="#3f3f3f" stroke-width="0.7"/><path d="M710.90 60 L710.90 72.5" stroke="#656565" stroke-width="0.8"/><text x="712.10" y="0" transform="translate(0 71.2) scale(1 1.22)" font-size="7.9" fill="#aaaaaa" font-family="Liberation Sans">800</text><path d="M714.55 71.0 L714.55 72.5" stroke="#3f3f3f" stroke-width="0.7"/><path d="M718.20 71.0 L718.20 72.5" stroke="#3f3f3f" stroke-width="0.7"/><path d="M721.85 71.0 L721.85 72.5" stroke="#3f3f3f" stroke-width="0.7"/><path d="M725.50 71.0 L725.50 72.5" stroke="#3f3f3f" stroke-width="0.7"/><path d="M729.15 70.0 L729.15 72.5" stroke="#3f3f3f" stroke-width="0.7"/><path d="M732.80 71.0 L732.80 72.5" stroke="#3f3f3f" stroke-width="0.7"/><path d="M736.45 71.0 L736.45 72.5" stroke="#3f3f3f" stroke-width="0.7"/><path d="M740.10 71.0 L740.10 72.5" stroke="#3f3f3f" stroke-width="0.7"/><path d="M743.75 71.0 L743.75 72.5" stroke="#3f3f3f" stroke-width="0.7"/><path d="M747.40 60 L747.40 72.5" stroke="#656565" stroke-width="0.8"/><text x="748.60" y="0" transform="translate(0 71.2) scale(1 1.22)" font-size="7.9" fill="#aaaaaa" font-family="Liberation Sans">900</text><path d="M751.05 71.0 L751.05 72.5" stroke="#3f3f3f" stroke-width="0.7"/><path d="M754.70 71.0 L754.70 72.5" stroke="#3f3f3f" stroke-width="0.7"/><path d="M758.35 71.0 L758.35 72.5" stroke="#3f3f3f" stroke-width="0.7"/><path d="M762.00 71.0 L762.00 72.5" stroke="#3f3f3f" stroke-width="0.7"/><path d="M765.65 70.0 L765.65 72.5" stroke="#3f3f3f" stroke-width="0.7"/><path d="M769.30 71.0 L769.30 72.5" stroke="#3f3f3f" stroke-width="0.7"/><path d="M772.95 71.0 L772.95 72.5" stroke="#3f3f3f" stroke-width="0.7"/><path d="M776.60 71.0 L776.60 72.5" stroke="#3f3f3f" stroke-width="0.7"/><path d="M780.25 71.0 L780.25 72.5" stroke="#3f3f3f" stroke-width="0.7"/><path d="M783.90 60 L783.90 72.5" stroke="#656565" stroke-width="0.8"/><text x="785.10" y="0" transform="translate(0 71.2) scale(1 1.22)" font-size="7.9" fill="#aaaaaa" font-family="Liberation Sans">1000</text><path d="M787.55 71.0 L787.55 72.5" stroke="#3f3f3f" stroke-width="0.7"/><path d="M791.20 71.0 L791.20 72.5" stroke="#3f3f3f" stroke-width="0.7"/><path d="M794.85 71.0 L794.85 72.5" stroke="#3f3f3f" stroke-width="0.7"/><path d="M798.50 71.0 L798.50 72.5" stroke="#3f3f3f" stroke-width="0.7"/><path d="M802.15 70.0 L802.15 72.5" stroke="#3f3f3f" stroke-width="0.7"/><path d="M805.80 71.0 L805.80 72.5" stroke="#3f3f3f" stroke-width="0.7"/><path d="M809.45 71.0 L809.45 72.5" stroke="#3f3f3f" stroke-width="0.7"/><path d="M813.10 71.0 L813.10 72.5" stroke="#3f3f3f" stroke-width="0.7"/><path d="M816.75 71.0 L816.75 72.5" stroke="#3f3f3f" stroke-width="0.7"/><path d="M820.40 60 L820.40 72.5" stroke="#656565" stroke-width="0.8"/><text x="821.60" y="0" transform="translate(0 71.2) scale(1 1.22)" font-size="7.9" fill="#aaaaaa" font-family="Liberation Sans">1100</text><path d="M824.05 71.0 L824.05 72.5" stroke="#3f3f3f" stroke-width="0.7"/><path d="M827.70 71.0 L827.70 72.5" stroke="#3f3f3f" stroke-width="0.7"/><path d="M831.35 71.0 L831.35 72.5" stroke="#3f3f3f" stroke-width="0.7"/><path d="M835.00 71.0 L835.00 72.5" stroke="#3f3f3f" stroke-width="0.7"/><path d="M838.65 70.0 L838.65 72.5" stroke="#3f3f3f" stroke-width="0.7"/><path d="M842.30 71.0 L842.30 72.5" stroke="#3f3f3f" stroke-width="0.7"/><path d="M845.95 71.0 L845.95 72.5" stroke="#3f3f3f" stroke-width="0.7"/><path d="M849.60 71.0 L849.60 72.5" stroke="#3f3f3f" stroke-width="0.7"/><path d="M853.25 71.0 L853.25 72.5" stroke="#3f3f3f" stroke-width="0.7"/><path d="M856.90 60 L856.90 72.5" stroke="#656565" stroke-width="0.8"/><text x="858.10" y="0" transform="translate(0 71.2) scale(1 1.22)" font-size="7.9" fill="#aaaaaa" font-family="Liberation Sans">1200</text><path d="M860.55 71.0 L860.55 72.5" stroke="#3f3f3f" stroke-width="0.7"/><path d="M864.20 71.0 L864.20 72.5" stroke="#3f3f3f" stroke-width="0.7"/><path d="M867.85 71.0 L867.85 72.5" stroke="#3f3f3f" stroke-width="0.7"/><path d="M871.50 71.0 L871.50 72.5" stroke="#3f3f3f" stroke-width="0.7"/><path d="M875.15 70.0 L875.15 72.5" stroke="#3f3f3f" stroke-width="0.7"/><path d="M878.80 71.0 L878.80 72.5" stroke="#3f3f3f" stroke-width="0.7"/><path d="M882.45 71.0 L882.45 72.5" stroke="#3f3f3f" stroke-width="0.7"/><path d="M886.10 71.0 L886.10 72.5" stroke="#3f3f3f" stroke-width="0.7"/><path d="M889.75 71.0 L889.75 72.5" stroke="#3f3f3f" stroke-width="0.7"/><path d="M893.40 60 L893.40 72.5" stroke="#656565" stroke-width="0.8"/><text x="894.60" y="0" transform="translate(0 71.2) scale(1 1.22)" font-size="7.9" fill="#aaaaaa" font-family="Liberation Sans">1300</text><path d="M897.05 71.0 L897.05 72.5" stroke="#3f3f3f" stroke-width="0.7"/><path d="M900.70 71.0 L900.70 72.5" stroke="#3f3f3f" stroke-width="0.7"/><path d="M904.35 71.0 L904.35 72.5" stroke="#3f3f3f" stroke-width="0.7"/><path d="M908.00 71.0 L908.00 72.5" stroke="#3f3f3f" stroke-width="0.7"/><path d="M911.65 70.0 L911.65 72.5" stroke="#3f3f3f" stroke-width="0.7"/><path d="M915.30 71.0 L915.30 72.5" stroke="#3f3f3f" stroke-width="0.7"/><path d="M918.95 71.0 L918.95 72.5" stroke="#3f3f3f" stroke-width="0.7"/><path d="M922.60 71.0 L922.60 72.5" stroke="#3f3f3f" stroke-width="0.7"/><path d="M926.25 71.0 L926.25 72.5" stroke="#3f3f3f" stroke-width="0.7"/><path d="M929.90 60 L929.90 72.5" stroke="#656565" stroke-width="0.8"/><text x="931.10" y="0" transform="translate(0 71.2) scale(1 1.22)" font-size="7.9" fill="#aaaaaa" font-family="Liberation Sans">1400</text><path d="M933.55 71.0 L933.55 72.5" stroke="#3f3f3f" stroke-width="0.7"/><path d="M937.20 71.0 L937.20 72.5" stroke="#3f3f3f" stroke-width="0.7"/><path d="M940.85 71.0 L940.85 72.5" stroke="#3f3f3f" stroke-width="0.7"/><path d="M944.50 71.0 L944.50 72.5" stroke="#3f3f3f" stroke-width="0.7"/><path d="M948.15 70.0 L948.15 72.5" stroke="#3f3f3f" stroke-width="0.7"/><path d="M951.80 71.0 L951.80 72.5" stroke="#3f3f3f" stroke-width="0.7"/><path d="M955.45 71.0 L955.45 72.5" stroke="#3f3f3f" stroke-width="0.7"/><path d="M959.10 71.0 L959.10 72.5" stroke="#3f3f3f" stroke-width="0.7"/><path d="M962.75 71.0 L962.75 72.5" stroke="#3f3f3f" stroke-width="0.7"/><path d="M966.40 60 L966.40 72.5" stroke="#656565" stroke-width="0.8"/><text x="967.60" y="0" transform="translate(0 71.2) scale(1 1.22)" font-size="7.9" fill="#aaaaaa" font-family="Liberation Sans">1500</text><path d="M970.05 71.0 L970.05 72.5" stroke="#3f3f3f" stroke-width="0.7"/><path d="M973.70 71.0 L973.70 72.5" stroke="#3f3f3f" stroke-width="0.7"/><path d="M977.35 71.0 L977.35 72.5" stroke="#3f3f3f" stroke-width="0.7"/><path d="M981.00 71.0 L981.00 72.5" stroke="#3f3f3f" stroke-width="0.7"/><path d="M984.65 70.0 L984.65 72.5" stroke="#3f3f3f" stroke-width="0.7"/><path d="M988.30 71.0 L988.30 72.5" stroke="#3f3f3f" stroke-width="0.7"/><path d="M991.95 71.0 L991.95 72.5" stroke="#3f3f3f" stroke-width="0.7"/><path d="M995.60 71.0 L995.60 72.5" stroke="#3f3f3f" stroke-width="0.7"/><path d="M999.25 71.0 L999.25 72.5" stroke="#3f3f3f" stroke-width="0.7"/><path d="M1002.90 60 L1002.90 72.5" stroke="#656565" stroke-width="0.8"/><text x="1004.10" y="0" transform="translate(0 71.2) scale(1 1.22)" font-size="7.9" fill="#aaaaaa" font-family="Liberation Sans">1600</text><path d="M1006.55 71.0 L1006.55 72.5" stroke="#3f3f3f" stroke-width="0.7"/><path d="M1010.20 71.0 L1010.20 72.5" stroke="#3f3f3f" stroke-width="0.7"/><path d="M1013.85 71.0 L1013.85 72.5" stroke="#3f3f3f" stroke-width="0.7"/><path d="M1017.50 71.0 L1017.50 72.5" stroke="#3f3f3f" stroke-width="0.7"/><path d="M1021.15 70.0 L1021.15 72.5" stroke="#3f3f3f" stroke-width="0.7"/><path d="M1024.80 71.0 L1024.80 72.5" stroke="#3f3f3f" stroke-width="0.7"/><path d="M1028.45 71.0 L1028.45 72.5" stroke="#3f3f3f" stroke-width="0.7"/><path d="M1032.10 71.0 L1032.10 72.5" stroke="#3f3f3f" stroke-width="0.7"/><path d="M1035.75 71.0 L1035.75 72.5" stroke="#3f3f3f" stroke-width="0.7"/><path d="M1039.40 60 L1039.40 72.5" stroke="#656565" stroke-width="0.8"/><text x="1040.60" y="0" transform="translate(0 71.2) scale(1 1.22)" font-size="7.9" fill="#aaaaaa" font-family="Liberation Sans">1700</text><path d="M1043.05 71.0 L1043.05 72.5" stroke="#3f3f3f" stroke-width="0.7"/><path d="M1046.70 71.0 L1046.70 72.5" stroke="#3f3f3f" stroke-width="0.7"/><path d="M1050.35 71.0 L1050.35 72.5" stroke="#3f3f3f" stroke-width="0.7"/><path d="M1054.00 71.0 L1054.00 72.5" stroke="#3f3f3f" stroke-width="0.7"/><path d="M1057.65 70.0 L1057.65 72.5" stroke="#3f3f3f" stroke-width="0.7"/><path d="M1061.30 71.0 L1061.30 72.5" stroke="#3f3f3f" stroke-width="0.7"/><path d="M37.0 74.59 L38.5 74.59" stroke="#3f3f3f" stroke-width="0.7"/><path d="M37.0 78.41 L38.5 78.41" stroke="#3f3f3f" stroke-width="0.7"/><path d="M37.0 82.22 L38.5 82.22" stroke="#3f3f3f" stroke-width="0.7"/><path d="M37.0 86.04 L38.5 86.04" stroke="#3f3f3f" stroke-width="0.7"/><path d="M27.5 89.85 L38.5 89.85" stroke="#656565" stroke-width="0.8"/><text x="28.4" y="0" transform="translate(0 100.05) scale(1 1.08)" font-size="8" fill="#aaaaaa" font-family="Liberation Sans">3</text><text x="28.4" y="0" transform="translate(0 108.05) scale(1 1.08)" font-size="8" fill="#aaaaaa" font-family="Liberation Sans">0</text><text x="28.4" y="0" transform="translate(0 116.05) scale(1 1.08)" font-size="8" fill="#aaaaaa" font-family="Liberation Sans">0</text><path d="M37.0 93.67 L38.5 93.67" stroke="#3f3f3f" stroke-width="0.7"/><path d="M37.0 97.48 L38.5 97.48" stroke="#3f3f3f" stroke-width="0.7"/><path d="M37.0 101.30 L38.5 101.30" stroke="#3f3f3f" stroke-width="0.7"/><path d="M37.0 105.11 L38.5 105.11" stroke="#3f3f3f" stroke-width="0.7"/><path d="M36.0 108.93 L38.5 108.93" stroke="#3f3f3f" stroke-width="0.7"/><path d="M37.0 112.74 L38.5 112.74" stroke="#3f3f3f" stroke-width="0.7"/><path d="M37.0 116.56 L38.5 116.56" stroke="#3f3f3f" stroke-width="0.7"/><path d="M37.0 120.37 L38.5 120.37" stroke="#3f3f3f" stroke-width="0.7"/><path d="M37.0 124.19 L38.5 124.19" stroke="#3f3f3f" stroke-width="0.7"/><path d="M27.5 128.00 L38.5 128.00" stroke="#656565" stroke-width="0.8"/><text x="28.4" y="0" transform="translate(0 138.20) scale(1 1.08)" font-size="8" fill="#aaaaaa" font-family="Liberation Sans">2</text><text x="28.4" y="0" transform="translate(0 146.20) scale(1 1.08)" font-size="8" fill="#aaaaaa" font-family="Liberation Sans">0</text><text x="28.4" y="0" transform="translate(0 154.20) scale(1 1.08)" font-size="8" fill="#aaaaaa" font-family="Liberation Sans">0</text><path d="M37.0 131.81 L38.5 131.81" stroke="#3f3f3f" stroke-width="0.7"/><path d="M37.0 135.63 L38.5 135.63" stroke="#3f3f3f" stroke-width="0.7"/><path d="M37.0 139.44 L38.5 139.44" stroke="#3f3f3f" stroke-width="0.7"/><path d="M37.0 143.26 L38.5 143.26" stroke="#3f3f3f" stroke-width="0.7"/><path d="M36.0 147.07 L38.5 147.07" stroke="#3f3f3f" stroke-width="0.7"/><path d="M37.0 150.89 L38.5 150.89" stroke="#3f3f3f" stroke-width="0.7"/><path d="M37.0 154.71 L38.5 154.71" stroke="#3f3f3f" stroke-width="0.7"/><path d="M37.0 158.52 L38.5 158.52" stroke="#3f3f3f" stroke-width="0.7"/><path d="M37.0 162.34 L38.5 162.34" stroke="#3f3f3f" stroke-width="0.7"/><path d="M27.5 166.15 L38.5 166.15" stroke="#656565" stroke-width="0.8"/><text x="28.4" y="0" transform="translate(0 176.35) scale(1 1.08)" font-size="8" fill="#aaaaaa" font-family="Liberation Sans">1</text><text x="28.4" y="0" transform="translate(0 184.35) scale(1 1.08)" font-size="8" fill="#aaaaaa" font-family="Liberation Sans">0</text><text x="28.4" y="0" transform="translate(0 192.35) scale(1 1.08)" font-size="8" fill="#aaaaaa" font-family="Liberation Sans">0</text><path d="M37.0 169.97 L38.5 169.97" stroke="#3f3f3f" stroke-width="0.7"/><path d="M37.0 173.78 L38.5 173.78" stroke="#3f3f3f" stroke-width="0.7"/><path d="M37.0 177.59 L38.5 177.59" stroke="#3f3f3f" stroke-width="0.7"/><path d="M37.0 181.41 L38.5 181.41" stroke="#3f3f3f" stroke-width="0.7"/><path d="M36.0 185.22 L38.5 185.22" stroke="#3f3f3f" stroke-width="0.7"/><path d="M37.0 189.04 L38.5 189.04" stroke="#3f3f3f" stroke-width="0.7"/><path d="M37.0 192.86 L38.5 192.86" stroke="#3f3f3f" stroke-width="0.7"/><path d="M37.0 196.67 L38.5 196.67" stroke="#3f3f3f" stroke-width="0.7"/><path d="M37.0 200.49 L38.5 200.49" stroke="#3f3f3f" stroke-width="0.7"/><path d="M27.5 204.30 L38.5 204.30" stroke="#656565" stroke-width="0.8"/><text x="28.4" y="0" transform="translate(0 214.50) scale(1 1.08)" font-size="8" fill="#aaaaaa" font-family="Liberation Sans">0</text><path d="M37.0 208.12 L38.5 208.12" stroke="#3f3f3f" stroke-width="0.7"/><path d="M37.0 211.93 L38.5 211.93" stroke="#3f3f3f" stroke-width="0.7"/><path d="M37.0 215.75 L38.5 215.75" stroke="#3f3f3f" stroke-width="0.7"/><path d="M37.0 219.56 L38.5 219.56" stroke="#3f3f3f" stroke-width="0.7"/><path d="M36.0 223.38 L38.5 223.38" stroke="#3f3f3f" stroke-width="0.7"/><path d="M37.0 227.19 L38.5 227.19" stroke="#3f3f3f" stroke-width="0.7"/><path d="M37.0 231.01 L38.5 231.01" stroke="#3f3f3f" stroke-width="0.7"/><path d="M37.0 234.82 L38.5 234.82" stroke="#3f3f3f" stroke-width="0.7"/><path d="M37.0 238.64 L38.5 238.64" stroke="#3f3f3f" stroke-width="0.7"/><path d="M27.5 242.45 L38.5 242.45" stroke="#656565" stroke-width="0.8"/><text x="28.4" y="0" transform="translate(0 252.65) scale(1 1.08)" font-size="8" fill="#aaaaaa" font-family="Liberation Sans">1</text><text x="28.4" y="0" transform="translate(0 260.65) scale(1 1.08)" font-size="8" fill="#aaaaaa" font-family="Liberation Sans">0</text><text x="28.4" y="0" transform="translate(0 268.65) scale(1 1.08)" font-size="8" fill="#aaaaaa" font-family="Liberation Sans">0</text><path d="M37.0 246.27 L38.5 246.27" stroke="#3f3f3f" stroke-width="0.7"/><path d="M37.0 250.08 L38.5 250.08" stroke="#3f3f3f" stroke-width="0.7"/><path d="M37.0 253.90 L38.5 253.90" stroke="#3f3f3f" stroke-width="0.7"/><path d="M37.0 257.71 L38.5 257.71" stroke="#3f3f3f" stroke-width="0.7"/><path d="M36.0 261.53 L38.5 261.53" stroke="#3f3f3f" stroke-width="0.7"/><path d="M37.0 265.34 L38.5 265.34" stroke="#3f3f3f" stroke-width="0.7"/><path d="M37.0 269.16 L38.5 269.16" stroke="#3f3f3f" stroke-width="0.7"/><path d="M37.0 272.97 L38.5 272.97" stroke="#3f3f3f" stroke-width="0.7"/><path d="M37.0 276.79 L38.5 276.79" stroke="#3f3f3f" stroke-width="0.7"/><path d="M27.5 280.60 L38.5 280.60" stroke="#656565" stroke-width="0.8"/><text x="28.4" y="0" transform="translate(0 290.80) scale(1 1.08)" font-size="8" fill="#aaaaaa" font-family="Liberation Sans">2</text><text x="28.4" y="0" transform="translate(0 298.80) scale(1 1.08)" font-size="8" fill="#aaaaaa" font-family="Liberation Sans">0</text><text x="28.4" y="0" transform="translate(0 306.80) scale(1 1.08)" font-size="8" fill="#aaaaaa" font-family="Liberation Sans">0</text><path d="M37.0 284.42 L38.5 284.42" stroke="#3f3f3f" stroke-width="0.7"/><path d="M37.0 288.23 L38.5 288.23" stroke="#3f3f3f" stroke-width="0.7"/><path d="M37.0 292.05 L38.5 292.05" stroke="#3f3f3f" stroke-width="0.7"/><path d="M37.0 295.86 L38.5 295.86" stroke="#3f3f3f" stroke-width="0.7"/><path d="M36.0 299.68 L38.5 299.68" stroke="#3f3f3f" stroke-width="0.7"/><path d="M37.0 303.49 L38.5 303.49" stroke="#3f3f3f" stroke-width="0.7"/><path d="M37.0 307.31 L38.5 307.31" stroke="#3f3f3f" stroke-width="0.7"/><path d="M37.0 311.12 L38.5 311.12" stroke="#3f3f3f" stroke-width="0.7"/><path d="M37.0 314.94 L38.5 314.94" stroke="#3f3f3f" stroke-width="0.7"/><path d="M27.5 318.75 L38.5 318.75" stroke="#656565" stroke-width="0.8"/><text x="28.4" y="0" transform="translate(0 328.95) scale(1 1.08)" font-size="8" fill="#aaaaaa" font-family="Liberation Sans">3</text><text x="28.4" y="0" transform="translate(0 336.95) scale(1 1.08)" font-size="8" fill="#aaaaaa" font-family="Liberation Sans">0</text><text x="28.4" y="0" transform="translate(0 344.95) scale(1 1.08)" font-size="8" fill="#aaaaaa" font-family="Liberation Sans">0</text><path d="M37.0 322.56 L38.5 322.56" stroke="#3f3f3f" stroke-width="0.7"/><path d="M37.0 326.38 L38.5 326.38" stroke="#3f3f3f" stroke-width="0.7"/><path d="M37.0 330.19 L38.5 330.19" stroke="#3f3f3f" stroke-width="0.7"/><path d="M37.0 334.01 L38.5 334.01" stroke="#3f3f3f" stroke-width="0.7"/><path d="M36.0 337.82 L38.5 337.82" stroke="#3f3f3f" stroke-width="0.7"/><path d="M37.0 341.64 L38.5 341.64" stroke="#3f3f3f" stroke-width="0.7"/><path d="M37.0 345.45 L38.5 345.45" stroke="#3f3f3f" stroke-width="0.7"/><path d="M37.0 349.27 L38.5 349.27" stroke="#3f3f3f" stroke-width="0.7"/><path d="M37.0 353.08 L38.5 353.08" stroke="#3f3f3f" stroke-width="0.7"/><path d="M27.5 356.90 L38.5 356.90" stroke="#656565" stroke-width="0.8"/><text x="28.4" y="0" transform="translate(0 367.10) scale(1 1.08)" font-size="8" fill="#aaaaaa" font-family="Liberation Sans">4</text><text x="28.4" y="0" transform="translate(0 375.10) scale(1 1.08)" font-size="8" fill="#aaaaaa" font-family="Liberation Sans">0</text><text x="28.4" y="0" transform="translate(0 383.10) scale(1 1.08)" font-size="8" fill="#aaaaaa" font-family="Liberation Sans">0</text><path d="M37.0 360.71 L38.5 360.71" stroke="#3f3f3f" stroke-width="0.7"/><path d="M37.0 364.53 L38.5 364.53" stroke="#3f3f3f" stroke-width="0.7"/><path d="M37.0 368.34 L38.5 368.34" stroke="#3f3f3f" stroke-width="0.7"/><path d="M37.0 372.16 L38.5 372.16" stroke="#3f3f3f" stroke-width="0.7"/><path d="M36.0 375.97 L38.5 375.97" stroke="#3f3f3f" stroke-width="0.7"/><path d="M37.0 379.79 L38.5 379.79" stroke="#3f3f3f" stroke-width="0.7"/><path d="M37.0 383.60 L38.5 383.60" stroke="#3f3f3f" stroke-width="0.7"/><path d="M37.0 387.42 L38.5 387.42" stroke="#3f3f3f" stroke-width="0.7"/><path d="M37.0 391.23 L38.5 391.23" stroke="#3f3f3f" stroke-width="0.7"/><path d="M27.5 395.05 L38.5 395.05" stroke="#656565" stroke-width="0.8"/><text x="28.4" y="0" transform="translate(0 405.25) scale(1 1.08)" font-size="8" fill="#aaaaaa" font-family="Liberation Sans">5</text><text x="28.4" y="0" transform="translate(0 413.25) scale(1 1.08)" font-size="8" fill="#aaaaaa" font-family="Liberation Sans">0</text><text x="28.4" y="0" transform="translate(0 421.25) scale(1 1.08)" font-size="8" fill="#aaaaaa" font-family="Liberation Sans">0</text><path d="M37.0 398.87 L38.5 398.87" stroke="#3f3f3f" stroke-width="0.7"/><path d="M37.0 402.68 L38.5 402.68" stroke="#3f3f3f" stroke-width="0.7"/><path d="M37.0 406.50 L38.5 406.50" stroke="#3f3f3f" stroke-width="0.7"/><path d="M37.0 410.31 L38.5 410.31" stroke="#3f3f3f" stroke-width="0.7"/><path d="M36.0 414.12 L38.5 414.12" stroke="#3f3f3f" stroke-width="0.7"/><path d="M37.0 417.94 L38.5 417.94" stroke="#3f3f3f" stroke-width="0.7"/><path d="M37.0 421.75 L38.5 421.75" stroke="#3f3f3f" stroke-width="0.7"/><path d="M37.0 425.57 L38.5 425.57" stroke="#3f3f3f" stroke-width="0.7"/><path d="M37.0 429.38 L38.5 429.38" stroke="#3f3f3f" stroke-width="0.7"/><path d="M27.5 433.20 L38.5 433.20" stroke="#656565" stroke-width="0.8"/><text x="28.4" y="0" transform="translate(0 443.40) scale(1 1.08)" font-size="8" fill="#aaaaaa" font-family="Liberation Sans">6</text><text x="28.4" y="0" transform="translate(0 451.40) scale(1 1.08)" font-size="8" fill="#aaaaaa" font-family="Liberation Sans">0</text><text x="28.4" y="0" transform="translate(0 459.40) scale(1 1.08)" font-size="8" fill="#aaaaaa" font-family="Liberation Sans">0</text><path d="M37.0 437.02 L38.5 437.02" stroke="#3f3f3f" stroke-width="0.7"/><path d="M37.0 440.83 L38.5 440.83" stroke="#3f3f3f" stroke-width="0.7"/><path d="M37.0 444.65 L38.5 444.65" stroke="#3f3f3f" stroke-width="0.7"/><path d="M37.0 448.46 L38.5 448.46" stroke="#3f3f3f" stroke-width="0.7"/><path d="M36.0 452.28 L38.5 452.28" stroke="#3f3f3f" stroke-width="0.7"/><path d="M37.0 456.09 L38.5 456.09" stroke="#3f3f3f" stroke-width="0.7"/><path d="M37.0 459.91 L38.5 459.91" stroke="#3f3f3f" stroke-width="0.7"/><path d="M37.0 463.72 L38.5 463.72" stroke="#3f3f3f" stroke-width="0.7"/><path d="M37.0 467.54 L38.5 467.54" stroke="#3f3f3f" stroke-width="0.7"/><path d="M27.5 471.35 L38.5 471.35" stroke="#656565" stroke-width="0.8"/><text x="28.4" y="0" transform="translate(0 481.55) scale(1 1.08)" font-size="8" fill="#aaaaaa" font-family="Liberation Sans">7</text><text x="28.4" y="0" transform="translate(0 489.55) scale(1 1.08)" font-size="8" fill="#aaaaaa" font-family="Liberation Sans">0</text><text x="28.4" y="0" transform="translate(0 497.55) scale(1 1.08)" font-size="8" fill="#aaaaaa" font-family="Liberation Sans">0</text><path d="M37.0 475.17 L38.5 475.17" stroke="#3f3f3f" stroke-width="0.7"/><path d="M37.0 478.98 L38.5 478.98" stroke="#3f3f3f" stroke-width="0.7"/><path d="M37.0 482.80 L38.5 482.80" stroke="#3f3f3f" stroke-width="0.7"/><path d="M37.0 486.61 L38.5 486.61" stroke="#3f3f3f" stroke-width="0.7"/><path d="M36.0 490.43 L38.5 490.43" stroke="#3f3f3f" stroke-width="0.7"/><path d="M37.0 494.24 L38.5 494.24" stroke="#3f3f3f" stroke-width="0.7"/><path d="M37.0 498.06 L38.5 498.06" stroke="#3f3f3f" stroke-width="0.7"/><path d="M37.0 501.87 L38.5 501.87" stroke="#3f3f3f" stroke-width="0.7"/><path d="M37.0 505.69 L38.5 505.69" stroke="#3f3f3f" stroke-width="0.7"/><path d="M27.5 509.50 L38.5 509.50" stroke="#656565" stroke-width="0.8"/><text x="28.4" y="0" transform="translate(0 519.70) scale(1 1.08)" font-size="8" fill="#aaaaaa" font-family="Liberation Sans">8</text><text x="28.4" y="0" transform="translate(0 527.70) scale(1 1.08)" font-size="8" fill="#aaaaaa" font-family="Liberation Sans">0</text><text x="28.4" y="0" transform="translate(0 535.70) scale(1 1.08)" font-size="8" fill="#aaaaaa" font-family="Liberation Sans">0</text><path d="M37.0 513.32 L38.5 513.32" stroke="#3f3f3f" stroke-width="0.7"/><path d="M37.0 517.13 L38.5 517.13" stroke="#3f3f3f" stroke-width="0.7"/><path d="M37.0 520.95 L38.5 520.95" stroke="#3f3f3f" stroke-width="0.7"/><path d="M37.0 524.76 L38.5 524.76" stroke="#3f3f3f" stroke-width="0.7"/><path d="M36.0 528.58 L38.5 528.58" stroke="#3f3f3f" stroke-width="0.7"/><path d="M37.0 532.39 L38.5 532.39" stroke="#3f3f3f" stroke-width="0.7"/><path d="M37.0 536.21 L38.5 536.21" stroke="#3f3f3f" stroke-width="0.7"/><path d="M37.0 540.02 L38.5 540.02" stroke="#3f3f3f" stroke-width="0.7"/><path d="M37.0 543.84 L38.5 543.84" stroke="#3f3f3f" stroke-width="0.7"/><path d="M27.5 547.65 L38.5 547.65" stroke="#656565" stroke-width="0.8"/><text x="28.4" y="0" transform="translate(0 557.85) scale(1 1.08)" font-size="8" fill="#aaaaaa" font-family="Liberation Sans">9</text><text x="28.4" y="0" transform="translate(0 565.85) scale(1 1.08)" font-size="8" fill="#aaaaaa" font-family="Liberation Sans">0</text><text x="28.4" y="0" transform="translate(0 573.85) scale(1 1.08)" font-size="8" fill="#aaaaaa" font-family="Liberation Sans">0</text><path d="M37.0 551.47 L38.5 551.47" stroke="#3f3f3f" stroke-width="0.7"/><path d="M37.0 555.28 L38.5 555.28" stroke="#3f3f3f" stroke-width="0.7"/><path d="M37.0 559.10 L38.5 559.10" stroke="#3f3f3f" stroke-width="0.7"/><path d="M37.0 562.91 L38.5 562.91" stroke="#3f3f3f" stroke-width="0.7"/><path d="M36.0 566.73 L38.5 566.73" stroke="#3f3f3f" stroke-width="0.7"/><path d="M37.0 570.54 L38.5 570.54" stroke="#3f3f3f" stroke-width="0.7"/><path d="M37.0 574.36 L38.5 574.36" stroke="#3f3f3f" stroke-width="0.7"/><path d="M37.0 578.17 L38.5 578.17" stroke="#3f3f3f" stroke-width="0.7"/><path d="M37.0 581.99 L38.5 581.99" stroke="#3f3f3f" stroke-width="0.7"/><path d="M27.5 585.80 L38.5 585.80" stroke="#656565" stroke-width="0.8"/><text x="28.4" y="0" transform="translate(0 596.00) scale(1 1.08)" font-size="8" fill="#aaaaaa" font-family="Liberation Sans">1</text><text x="28.4" y="0" transform="translate(0 604.00) scale(1 1.08)" font-size="8" fill="#aaaaaa" font-family="Liberation Sans">0</text><text x="28.4" y="0" transform="translate(0 612.00) scale(1 1.08)" font-size="8" fill="#aaaaaa" font-family="Liberation Sans">0</text><text x="28.4" y="0" transform="translate(0 620.00) scale(1 1.08)" font-size="8" fill="#aaaaaa" font-family="Liberation Sans">0</text><path d="M37.0 589.62 L38.5 589.62" stroke="#3f3f3f" stroke-width="0.7"/><path d="M37.0 593.43 L38.5 593.43" stroke="#3f3f3f" stroke-width="0.7"/><path d="M37.0 597.25 L38.5 597.25" stroke="#3f3f3f" stroke-width="0.7"/><path d="M37.0 601.06 L38.5 601.06" stroke="#3f3f3f" stroke-width="0.7"/><path d="M36.0 604.88 L38.5 604.88" stroke="#3f3f3f" stroke-width="0.7"/><path d="M37.0 608.69 L38.5 608.69" stroke="#3f3f3f" stroke-width="0.7"/><path d="M37.0 612.50 L38.5 612.50" stroke="#3f3f3f" stroke-width="0.7"/><path d="M37.0 616.32 L38.5 616.32" stroke="#3f3f3f" stroke-width="0.7"/><path d="M37.0 620.13 L38.5 620.13" stroke="#3f3f3f" stroke-width="0.7"/><path d="M27.5 623.95 L38.5 623.95" stroke="#656565" stroke-width="0.8"/><text x="28.4" y="0" transform="translate(0 634.15) scale(1 1.08)" font-size="8" fill="#aaaaaa" font-family="Liberation Sans">1</text><text x="28.4" y="0" transform="translate(0 642.15) scale(1 1.08)" font-size="8" fill="#aaaaaa" font-family="Liberation Sans">1</text><text x="28.4" y="0" transform="translate(0 650.15) scale(1 1.08)" font-size="8" fill="#aaaaaa" font-family="Liberation Sans">0</text><text x="28.4" y="0" transform="translate(0 658.15) scale(1 1.08)" font-size="8" fill="#aaaaaa" font-family="Liberation Sans">0</text><path d="M37.0 627.77 L38.5 627.77" stroke="#3f3f3f" stroke-width="0.7"/><path d="M37.0 631.58 L38.5 631.58" stroke="#3f3f3f" stroke-width="0.7"/><path d="M37.0 635.40 L38.5 635.40" stroke="#3f3f3f" stroke-width="0.7"/><path d="M37.0 639.21 L38.5 639.21" stroke="#3f3f3f" stroke-width="0.7"/><path d="M36.0 643.03 L38.5 643.03" stroke="#3f3f3f" stroke-width="0.7"/><path d="M37.0 646.84 L38.5 646.84" stroke="#3f3f3f" stroke-width="0.7"/><path d="M37.0 650.66 L38.5 650.66" stroke="#3f3f3f" stroke-width="0.7"/><path d="M37.0 654.47 L38.5 654.47" stroke="#3f3f3f" stroke-width="0.7"/><path d="M37.0 658.29 L38.5 658.29" stroke="#3f3f3f" stroke-width="0.7"/><path d="M27.5 662.10 L38.5 662.10" stroke="#656565" stroke-width="0.8"/><text x="28.4" y="0" transform="translate(0 672.30) scale(1 1.08)" font-size="8" fill="#aaaaaa" font-family="Liberation Sans">1</text><text x="28.4" y="0" transform="translate(0 680.30) scale(1 1.08)" font-size="8" fill="#aaaaaa" font-family="Liberation Sans">2</text><text x="28.4" y="0" transform="translate(0 688.30) scale(1 1.08)" font-size="8" fill="#aaaaaa" font-family="Liberation Sans">0</text><text x="28.4" y="0" transform="translate(0 696.30) scale(1 1.08)" font-size="8" fill="#aaaaaa" font-family="Liberation Sans">0</text><path d="M37.0 665.92 L38.5 665.92" stroke="#3f3f3f" stroke-width="0.7"/><path d="M37.0 669.73 L38.5 669.73" stroke="#3f3f3f" stroke-width="0.7"/><path d="M37.0 673.55 L38.5 673.55" stroke="#3f3f3f" stroke-width="0.7"/><path d="M37.0 677.36 L38.5 677.36" stroke="#3f3f3f" stroke-width="0.7"/><path d="M36.0 681.18 L38.5 681.18" stroke="#3f3f3f" stroke-width="0.7"/><path d="M37.0 684.99 L38.5 684.99" stroke="#3f3f3f" stroke-width="0.7"/><path d="M37.0 688.81 L38.5 688.81" stroke="#3f3f3f" stroke-width="0.7"/><path d="M37.0 692.62 L38.5 692.62" stroke="#3f3f3f" stroke-width="0.7"/><path d="M37.0 696.44 L38.5 696.44" stroke="#3f3f3f" stroke-width="0.7"/><path d="M27.5 700.25 L38.5 700.25" stroke="#656565" stroke-width="0.8"/><text x="28.4" y="0" transform="translate(0 710.45) scale(1 1.08)" font-size="8" fill="#aaaaaa" font-family="Liberation Sans">1</text><text x="28.4" y="0" transform="translate(0 718.45) scale(1 1.08)" font-size="8" fill="#aaaaaa" font-family="Liberation Sans">3</text><text x="28.4" y="0" transform="translate(0 726.45) scale(1 1.08)" font-size="8" fill="#aaaaaa" font-family="Liberation Sans">0</text><text x="28.4" y="0" transform="translate(0 734.45) scale(1 1.08)" font-size="8" fill="#aaaaaa" font-family="Liberation Sans">0</text><path d="M37.0 704.07 L38.5 704.07" stroke="#3f3f3f" stroke-width="0.7"/></svg>
<div class="a" style="left:27.5px;top:60px;width:11px;height:12.5px;background:#525252;"></div>
<div class="a" style="left:27.5px;top:708px;width:1036px;height:12px;background:#4f4f4f;"></div>
<div class="a" style="left:27.5px;top:708px;width:32px;height:12px;background:#4a4a4a;"></div>
<div class="t" style="left:31.7px;top:711px;font-size:6.5px;color:#e8e8e8;">54,64%</div>
<div class="t" style="left:73.9px;top:711px;font-size:6.45px;color:#c8c8c8;">1381 Px x 1080 Px (72 ppcm)</div>
<svg class="a" style="left:175px;top:711px;" width="4" height="7" viewBox="0 0 4 7"><path d="M0.8 0.8 L3 3.5 L0.8 6.2" stroke="#cfcfcf" stroke-width="0.9" fill="none"/></svg>
<svg class="a" style="left:187px;top:712px;" width="4" height="6" viewBox="0 0 4 6"><path d="M3 0.8 L1 3 L3 5.2" stroke="#656565" stroke-width="0.8" fill="none"/></svg>
<div class="a" style="left:400px;top:710px;width:362px;height:8px;background:#6b6b6b;"></div>
<svg class="a" style="left:1056px;top:712px;" width="4" height="6" viewBox="0 0 4 6"><path d="M0.8 0.8 L3 3 L0.8 5.2" stroke="#7a7a7a" stroke-width="0.8" fill="none"/></svg>
<svg class="a" style="left:1066px;top:66px;" width="6" height="4" viewBox="0 0 6 4"><path d="M0.5 3.5 L3 1 L5.5 3.5" stroke="#8a8a8a" stroke-width="0.9" fill="none"/></svg>
<svg class="a" style="left:1066px;top:700px;" width="6" height="4" viewBox="0 0 6 4"><path d="M0.5 0.5 L3 3 L5.5 0.5" stroke="#8a8a8a" stroke-width="0.9" fill="none"/></svg>
<div class="a" style="left:1076px;top:50px;width:179px;height:19px;background:#474747;"></div>
<div class="a" style="left:1076px;top:50px;width:34px;height:19px;background:#535353;"></div>
<div class="a" style="left:1143px;top:51px;width:0.8px;height:16px;background:#444444;"></div>
<div class="t" style="left:1082px;top:56px;font-size:6.5px;color:#ececec;font-weight:bold">Ebenen</div>
<div class="t" style="left:1116px;top:56px;font-size:6.8px;color:#a8a8a8;">Kanäle</div>
<div class="t" style="left:1149.5px;top:56px;font-size:6.8px;color:#a8a8a8;">Pfade</div>
<div class="t" style="left:1180px;top:56px;font-size:6.8px;color:#a8a8a8;">3D</div>
<svg class="a" style="left:1243.5px;top:56.5px;" width="8" height="6" viewBox="0 0 8 6"><path d="M0 0.5 L8 0.5 M0 2.2 L8 2.2 M0 3.9 L8 3.9 M0 5.6 L8 5.6" stroke="#7a7a7a" stroke-width="0.9"/></svg>
<svg class="a" style="left:1246px;top:42.8px;" width="5" height="4" viewBox="0 0 5 4"><path d="M0 0 L2.2 2 L0 4 Z M2.6 0 L4.8 2 L2.6 4 Z" fill="#c0c0c0"/></svg>
<svg class="a" style="left:1272px;top:42.8px;" width="5" height="4" viewBox="0 0 5 4"><path d="M2.2 0 L0 2 L2.2 4 Z M4.8 0 L2.6 2 L4.8 4 Z" fill="#c0c0c0"/></svg>
<svg class="a" style="left:1262.3px;top:58.7px;" width="13" height="13" viewBox="0 0 13 13"><circle cx="6.5" cy="6.5" r="5.8" stroke="#dcdcdc" stroke-width="1" fill="none"/><circle cx="6.5" cy="6.5" r="3" stroke="#dcdcdc" stroke-width="1.2" fill="none"/><path d="M6.5 1 L6.5 3.5 M11.5 5 L9.3 5.6 M10 11 L8.2 9 M3 11 L4.8 9 M1.5 5 L3.7 5.6" stroke="#dcdcdc" stroke-width="0.9"/></svg>
<div class="a" style="left:1257px;top:77.2px;width:23px;height:1px;background:#474747;"></div>
<div class="a" style="left:1079px;top:76px;width:58px;height:11.7px;background:#454545;"></div>
<svg class="a" style="left:1083.5px;top:78.5px;" width="8" height="8" viewBox="0 0 8 8"><circle cx="3.2" cy="3.2" r="2.4" stroke="#e0e0e0" stroke-width="1.1" fill="none"/><path d="M5 5 L7.3 7.3" stroke="#e0e0e0" stroke-width="1.4"/></svg>
<div class="t" style="left:1093.2px;top:78.5px;font-size:6.8px;color:#e6e6e6;">Art</div>
<svg class="a" style="left:1131.5px;top:81px;" width="4.5" height="3" viewBox="0 0 4.5 3"><path d="M0.3 0.3 L2.25 2.6 L4.2 0.3" stroke="#bdbdbd" stroke-width="0.9" fill="none"/></svg>
<svg class="a" style="left:1155px;top:78px;" width="9" height="7.5" viewBox="0 0 9 7.5"><rect x="0.5" y="0.5" width="8" height="6.5" stroke="#d8d8d8" stroke-width="0.9" fill="none"/><path d="M1.5 6 L3 4 L4.2 5.2 L5.5 3.8 L7.5 6 Z" fill="#d8d8d8"/></svg>
<svg class="a" style="left:1171.5px;top:77.5px;" width="8.5" height="8.5" viewBox="0 0 8.5 8.5"><circle cx="4.2" cy="4.2" r="3.8" fill="#dcdcdc"/><path d="M7 1.5 A3.8 3.8 0 0 1 1.5 7 Z" fill="#535353" transform="rotate(180 4.2 4.2)"/><circle cx="4.2" cy="4.2" r="3.8" stroke="#dcdcdc" stroke-width="0.6" fill="none"/></svg>
<svg class="a" style="left:1188.5px;top:78px;" width="7.5" height="7.5" viewBox="0 0 7.5 7.5"><path d="M0 0 L7.5 0 L7.5 2.2 L6.6 2.2 L6.4 1.1 L4.5 1.1 L4.5 6.4 L5.5 6.6 L5.5 7.5 L2 7.5 L2 6.6 L3 6.4 L3 1.1 L1.1 1.1 L0.9 2.2 L0 2.2 Z" fill="#dcdcdc"/></svg>
<svg class="a" style="left:1203.5px;top:77.5px;" width="8.5" height="8.5" viewBox="0 0 8.5 8.5"><rect x="1.2" y="1.2" width="6" height="6" stroke="#d8d8d8" stroke-width="0.9" fill="none"/><rect x="0" y="0" width="2.4" height="2.4" fill="#d8d8d8"/><rect x="6" y="0" width="2.4" height="2.4" fill="#d8d8d8"/><rect x="0" y="6" width="2.4" height="2.4" fill="#d8d8d8"/><rect x="6" y="6" width="2.4" height="2.4" fill="#d8d8d8"/></svg>
<svg class="a" style="left:1220.5px;top:77.5px;" width="8" height="9" viewBox="0 0 8 9"><path d="M2.5 0.5 L5.5 0.5 L7.5 2.5 L7.5 8.5 L2.5 8.5 Z" stroke="#d8d8d8" stroke-width="0.9" fill="none"/><rect x="0.3" y="4.5" width="4.5" height="4.3" fill="#dcdcdc"/></svg>
<svg class="a" style="left:1245.5px;top:75px;" width="6.5" height="10" viewBox="0 0 6.5 10"><circle cx="3.2" cy="3.3" r="3" fill="#e8e8e8"/><path d="M1.5 7 L3.2 9 L4.9 7" stroke="#6a6a6a" stroke-width="0.7" fill="none"/></svg>
<div class="a" style="left:1076px;top:91px;width:179px;height:1px;background:#4a4a4a;"></div>
<div class="a" style="left:1079px;top:95px;width:98px;height:13px;background:#454545;"></div>
<div class="t" style="left:1083px;top:99.2px;font-size:6.8px;color:#e6e6e6;">Hindurchwirken</div>
<svg class="a" style="left:1172px;top:100.8px;" width="4.5" height="3" viewBox="0 0 4.5 3"><path d="M0.3 0.3 L2.25 2.6 L4.2 0.3" stroke="#bdbdbd" stroke-width="0.9" fill="none"/></svg>
<div class="t" style="left:1181.7px;top:99.2px;font-size:6.8px;color:#b8b8b8;">Deckkraft:</div>
<div class="a" style="left:1216px;top:96px;width:24.5px;height:10.5px;background:#474747;"></div>
<div class="t" style="left:1218.8px;top:99.2px;font-size:6.8px;color:#e6e6e6;">100%</div>
<div class="a" style="left:1242px;top:96px;width:8.7px;height:10.5px;background:#474747;"></div>
<svg class="a" style="left:1244.2px;top:100.3px;" width="4.2" height="3" viewBox="0 0 4.2 3"><path d="M0.3 0.3 L2.1 2.6 L3.9000000000000004 0.3" stroke="#b8b8b8" stroke-width="0.9" fill="none"/></svg>
<div class="a" style="left:1076px;top:110px;width:179px;height:1px;background:#4a4a4a;"></div>
<div class="t" style="left:1080px;top:118.6px;font-size:6.8px;color:#b0b0b0;">Fixieren:</div>
<svg class="a" style="left:1111px;top:116px;" width="8.5" height="8.5" viewBox="0 0 8.5 8.5"><rect x="0.4" y="0.4" width="7.7" height="7.7" fill="#a0a0a0"/><rect x="2.8" y="0.4" width="2.6" height="2.6" fill="#5a5a5a"/><rect x="0.4" y="2.8" width="2.6" height="2.6" fill="#5a5a5a"/><rect x="5.4" y="2.8" width="2.6" height="2.6" fill="#5a5a5a"/><rect x="2.8" y="5.4" width="2.6" height="2.6" fill="#5a5a5a"/></svg>
<svg class="a" style="left:1125.5px;top:115.5px;" width="10" height="11" viewBox="0 0 10 11"><path d="M9 0.8 L4.5 6.5" stroke="#a8a8a8" stroke-width="1.5" stroke-linecap="round"/><path d="M4.2 5.8 C2.5 5.8 1.8 7.2 1 10 C3 9.8 5 9 5.3 7 Z" fill="#a8a8a8"/></svg>
<svg class="a" style="left:1140px;top:116px;" width="9" height="9" viewBox="0 0 9 9"><path d="M4.5 0.5 L4.5 8.5 M0.5 4.5 L8.5 4.5" stroke="#b0b0b0" stroke-width="0.8"/><path d="M3.3 1.7 L4.5 0.3 L5.7 1.7 Z M3.3 7.3 L4.5 8.7 L5.7 7.3 Z M1.7 3.3 L0.3 4.5 L1.7 5.7 Z M7.3 3.3 L8.7 4.5 L7.3 5.7 Z" fill="#b0b0b0"/></svg>
<svg class="a" style="left:1155px;top:116px;" width="10" height="10" viewBox="0 0 10 10"><path d="M1.8 0 L1.8 9.2 L10 9.2" stroke="#c0c0c0" stroke-width="1" fill="none"/><path d="M0 1.8 L5.5 1.8 L8.2 4.5 L8.2 10" stroke="#c0c0c0" stroke-width="1" fill="none"/><path d="M2.5 2.5 L5.3 2.5 L7.5 4.7 L7.5 8.5 L2.5 8.5 Z" fill="#3a3a3a"/><path d="M5.3 2.5 L7.5 4.7 L5.3 4.7 Z" fill="#c8c8c8"/></svg>
<svg class="a" style="left:1170.5px;top:116px;" width="7.5" height="9.5" viewBox="0 0 7.5 9.5"><path d="M1.9 4.3 L1.9 2.8 A1.85 1.85 0 0 1 5.6 2.8 L5.6 4.3" stroke="#e0e0e0" stroke-width="1.1" fill="none"/><rect x="0.3" y="4.2" width="6.9" height="5.2" fill="#e0e0e0"/><rect x="3.2" y="6" width="1.1" height="1.6" fill="#8a8a8a"/></svg>
<div class="t" style="left:1191.5px;top:118.6px;font-size:6.8px;color:#b0b0b0;">Fläche:</div>
<div class="a" style="left:1216px;top:116px;width:24.5px;height:9.5px;background:#474747;"></div>
<div class="t" style="left:1218.8px;top:118.6px;font-size:6.8px;color:#e6e6e6;">100%</div>
<div class="a" style="left:1242px;top:116px;width:8.7px;height:9.5px;background:#474747;"></div>
<svg class="a" style="left:1244.2px;top:119.8px;" width="4.2" height="3" viewBox="0 0 4.2 3"><path d="M0.3 0.3 L2.1 2.6 L3.9000000000000004 0.3" stroke="#b8b8b8" stroke-width="0.9" fill="none"/></svg>
<div class="a" style="left:1076px;top:128px;width:179px;height:0.6px;background:#505050;"></div>
<div class="a" style="left:1083px;top:129.5px;width:10px;height:0.8px;background:#6a6a6a;"></div>
<div class="a" style="left:1106px;top:131px;width:10px;height:1px;background:#d0d0d0;"></div>
<div class="a" style="left:1079px;top:154.61px;width:164px;height:0.7px;background:#4f4f4f;"></div>
<div class="a" style="left:1080px;top:140.40px;width:10.5px;height:10.5px;border:0.7px solid #585858"></div>
<svg class="a" style="left:1099.5px;top:142.79999999999998px;" width="4" height="7" viewBox="0 0 4 7"><path d="M0.6 0.5 L3 3.2 L0.6 6" stroke="#c0c0c0" stroke-width="0.8" fill="none"/></svg>
<svg class="a" style="left:1106.4px;top:143.0px;" width="10.5" height="7.5" viewBox="0 0 10.5 7.5"><path d="M0 0.5 L3.5 0.5 L4.5 1.6 L10.2 1.6 L10.2 7.2 L0 7.2 Z" fill="#e4e4e4"/><path d="M0 2.4 L10.2 2.4" stroke="#9a9a9a" stroke-width="0.5"/></svg>
<div class="t" style="left:1123.6px;top:143.7px;font-size:7.1px;color:#dcdcdc;letter-spacing:-0.14px">Sättigung</div>
<div class="a" style="left:1079px;top:172.02999999999997px;width:164px;height:0.7px;background:#4f4f4f;"></div>
<div class="a" style="left:1080px;top:157.82px;width:10.5px;height:10.5px;border:0.7px solid #585858"></div>
<svg class="a" style="left:1099.5px;top:160.21999999999997px;" width="4" height="7" viewBox="0 0 4 7"><path d="M0.6 0.5 L3 3.2 L0.6 6" stroke="#c0c0c0" stroke-width="0.8" fill="none"/></svg>
<svg class="a" style="left:1106.4px;top:160.42px;" width="10.5" height="7.5" viewBox="0 0 10.5 7.5"><path d="M0 0.5 L3.5 0.5 L4.5 1.6 L10.2 1.6 L10.2 7.2 L0 7.2 Z" fill="#e4e4e4"/><path d="M0 2.4 L10.2 2.4" stroke="#9a9a9a" stroke-width="0.5"/></svg>
<div class="t" style="left:1123.6px;top:161.11999999999998px;font-size:7.1px;color:#dcdcdc;letter-spacing:-0.14px">Farbton</div>
<div class="a" style="left:1079px;top:189.45px;width:164px;height:0.7px;background:#4f4f4f;"></div>
<div class="a" style="left:1080px;top:175.24px;width:10.5px;height:10.5px;border:0.7px solid #585858"></div>
<svg class="a" style="left:1099.5px;top:177.64px;" width="4" height="7" viewBox="0 0 4 7"><path d="M0.6 0.5 L3 3.2 L0.6 6" stroke="#c0c0c0" stroke-width="0.8" fill="none"/></svg>
<svg class="a" style="left:1106.4px;top:177.84px;" width="10.5" height="7.5" viewBox="0 0 10.5 7.5"><path d="M0 0.5 L3.5 0.5 L4.5 1.6 L10.2 1.6 L10.2 7.2 L0 7.2 Z" fill="#e4e4e4"/><path d="M0 2.4 L10.2 2.4" stroke="#9a9a9a" stroke-width="0.5"/></svg>
<div class="t" style="left:1123.6px;top:178.54px;font-size:7.1px;color:#dcdcdc;letter-spacing:-0.14px">Dividieren</div>
<div class="a" style="left:1079px;top:206.87px;width:164px;height:0.7px;background:#4f4f4f;"></div>
<div class="a" style="left:1080px;top:192.66px;width:10.5px;height:10.5px;border:0.7px solid #585858"></div>
<svg class="a" style="left:1099.5px;top:195.06px;" width="4" height="7" viewBox="0 0 4 7"><path d="M0.6 0.5 L3 3.2 L0.6 6" stroke="#c0c0c0" stroke-width="0.8" fill="none"/></svg>
<svg class="a" style="left:1106.4px;top:195.26000000000002px;" width="10.5" height="7.5" viewBox="0 0 10.5 7.5"><path d="M0 0.5 L3.5 0.5 L4.5 1.6 L10.2 1.6 L10.2 7.2 L0 7.2 Z" fill="#e4e4e4"/><path d="M0 2.4 L10.2 2.4" stroke="#9a9a9a" stroke-width="0.5"/></svg>
<div class="t" style="left:1123.6px;top:195.96px;font-size:7.1px;color:#dcdcdc;letter-spacing:-0.14px">Subtrahieren</div>
<div class="a" style="left:1079px;top:224.29000000000002px;width:164px;height:0.7px;background:#4f4f4f;"></div>
<div class="a" style="left:1080px;top:210.08px;width:10.5px;height:10.5px;border:0.7px solid #585858"></div>
<svg class="a" style="left:1099.5px;top:212.48px;" width="4" height="7" viewBox="0 0 4 7"><path d="M0.6 0.5 L3 3.2 L0.6 6" stroke="#c0c0c0" stroke-width="0.8" fill="none"/></svg>
<svg class="a" style="left:1106.4px;top:212.68px;" width="10.5" height="7.5" viewBox="0 0 10.5 7.5"><path d="M0 0.5 L3.5 0.5 L4.5 1.6 L10.2 1.6 L10.2 7.2 L0 7.2 Z" fill="#e4e4e4"/><path d="M0 2.4 L10.2 2.4" stroke="#9a9a9a" stroke-width="0.5"/></svg>
<div class="t" style="left:1123.6px;top:213.38px;font-size:7.1px;color:#dcdcdc;letter-spacing:-0.14px">Ausschluss</div>
<div class="a" style="left:1079px;top:241.70999999999998px;width:164px;height:0.7px;background:#4f4f4f;"></div>
<div class="a" style="left:1080px;top:227.50px;width:10.5px;height:10.5px;border:0.7px solid #585858"></div>
<svg class="a" style="left:1099.5px;top:229.89999999999998px;" width="4" height="7" viewBox="0 0 4 7"><path d="M0.6 0.5 L3 3.2 L0.6 6" stroke="#c0c0c0" stroke-width="0.8" fill="none"/></svg>
<svg class="a" style="left:1106.4px;top:230.1px;" width="10.5" height="7.5" viewBox="0 0 10.5 7.5"><path d="M0 0.5 L3.5 0.5 L4.5 1.6 L10.2 1.6 L10.2 7.2 L0 7.2 Z" fill="#e4e4e4"/><path d="M0 2.4 L10.2 2.4" stroke="#9a9a9a" stroke-width="0.5"/></svg>
<div class="t" style="left:1123.6px;top:230.79999999999998px;font-size:7.1px;color:#dcdcdc;letter-spacing:-0.14px">Differenz</div>
<div class="a" style="left:1079px;top:259.13px;width:164px;height:0.7px;background:#4f4f4f;"></div>
<div class="a" style="left:1080px;top:244.92px;width:10.5px;height:10.5px;border:0.7px solid #585858"></div>
<svg class="a" style="left:1099.5px;top:247.32px;" width="4" height="7" viewBox="0 0 4 7"><path d="M0.6 0.5 L3 3.2 L0.6 6" stroke="#c0c0c0" stroke-width="0.8" fill="none"/></svg>
<svg class="a" style="left:1106.4px;top:247.52px;" width="10.5" height="7.5" viewBox="0 0 10.5 7.5"><path d="M0 0.5 L3.5 0.5 L4.5 1.6 L10.2 1.6 L10.2 7.2 L0 7.2 Z" fill="#e4e4e4"/><path d="M0 2.4 L10.2 2.4" stroke="#9a9a9a" stroke-width="0.5"/></svg>
<div class="t" style="left:1123.6px;top:248.22px;font-size:7.1px;color:#dcdcdc;letter-spacing:-0.14px">Hart mischen</div>
<div class="a" style="left:1079px;top:276.55000000000007px;width:164px;height:0.7px;background:#4f4f4f;"></div>
<div class="a" style="left:1080px;top:262.34px;width:10.5px;height:10.5px;border:0.7px solid #585858"></div>
<svg class="a" style="left:1099.5px;top:264.74px;" width="4" height="7" viewBox="0 0 4 7"><path d="M0.6 0.5 L3 3.2 L0.6 6" stroke="#c0c0c0" stroke-width="0.8" fill="none"/></svg>
<svg class="a" style="left:1106.4px;top:264.94px;" width="10.5" height="7.5" viewBox="0 0 10.5 7.5"><path d="M0 0.5 L3.5 0.5 L4.5 1.6 L10.2 1.6 L10.2 7.2 L0 7.2 Z" fill="#e4e4e4"/><path d="M0 2.4 L10.2 2.4" stroke="#9a9a9a" stroke-width="0.5"/></svg>
<div class="t" style="left:1123.6px;top:265.64000000000004px;font-size:7.1px;color:#dcdcdc;letter-spacing:-0.14px">Lichtpunkt</div>
<div class="a" style="left:1079px;top:293.9700000000001px;width:164px;height:0.7px;background:#4f4f4f;"></div>
<div class="a" style="left:1080px;top:279.76px;width:10.5px;height:10.5px;border:0.7px solid #585858"></div>
<svg class="a" style="left:1099.5px;top:282.16px;" width="4" height="7" viewBox="0 0 4 7"><path d="M0.6 0.5 L3 3.2 L0.6 6" stroke="#c0c0c0" stroke-width="0.8" fill="none"/></svg>
<svg class="a" style="left:1106.4px;top:282.36px;" width="10.5" height="7.5" viewBox="0 0 10.5 7.5"><path d="M0 0.5 L3.5 0.5 L4.5 1.6 L10.2 1.6 L10.2 7.2 L0 7.2 Z" fill="#e4e4e4"/><path d="M0 2.4 L10.2 2.4" stroke="#9a9a9a" stroke-width="0.5"/></svg>
<div class="t" style="left:1123.6px;top:283.06000000000006px;font-size:7.1px;color:#dcdcdc;letter-spacing:-0.14px">Lineares Licht</div>
<div class="a" style="left:1079px;top:311.39000000000004px;width:164px;height:0.7px;background:#4f4f4f;"></div>
<div class="a" style="left:1080px;top:297.18px;width:10.5px;height:10.5px;border:0.7px solid #585858"></div>
<svg class="a" style="left:1099.5px;top:299.58px;" width="4" height="7" viewBox="0 0 4 7"><path d="M0.6 0.5 L3 3.2 L0.6 6" stroke="#c0c0c0" stroke-width="0.8" fill="none"/></svg>
<svg class="a" style="left:1106.4px;top:299.78px;" width="10.5" height="7.5" viewBox="0 0 10.5 7.5"><path d="M0 0.5 L3.5 0.5 L4.5 1.6 L10.2 1.6 L10.2 7.2 L0 7.2 Z" fill="#e4e4e4"/><path d="M0 2.4 L10.2 2.4" stroke="#9a9a9a" stroke-width="0.5"/></svg>
<div class="t" style="left:1123.6px;top:300.48px;font-size:7.1px;color:#dcdcdc;letter-spacing:-0.14px">Strahlendes Licht</div>
<div class="a" style="left:1079px;top:328.81000000000006px;width:164px;height:0.7px;background:#4f4f4f;"></div>
<div class="a" style="left:1080px;top:314.60px;width:10.5px;height:10.5px;border:0.7px solid #585858"></div>
<svg class="a" style="left:1099.5px;top:317.0px;" width="4" height="7" viewBox="0 0 4 7"><path d="M0.6 0.5 L3 3.2 L0.6 6" stroke="#c0c0c0" stroke-width="0.8" fill="none"/></svg>
<svg class="a" style="left:1106.4px;top:317.2px;" width="10.5" height="7.5" viewBox="0 0 10.5 7.5"><path d="M0 0.5 L3.5 0.5 L4.5 1.6 L10.2 1.6 L10.2 7.2 L0 7.2 Z" fill="#e4e4e4"/><path d="M0 2.4 L10.2 2.4" stroke="#9a9a9a" stroke-width="0.5"/></svg>
<div class="t" style="left:1123.6px;top:317.90000000000003px;font-size:7.1px;color:#dcdcdc;letter-spacing:-0.14px">Hartes Licht</div>
<div class="a" style="left:1079px;top:346.2300000000001px;width:164px;height:0.7px;background:#4f4f4f;"></div>
<div class="a" style="left:1080px;top:332.02px;width:10.5px;height:10.5px;border:0.7px solid #585858"></div>
<svg class="a" style="left:1099.5px;top:334.42px;" width="4" height="7" viewBox="0 0 4 7"><path d="M0.6 0.5 L3 3.2 L0.6 6" stroke="#c0c0c0" stroke-width="0.8" fill="none"/></svg>
<svg class="a" style="left:1106.4px;top:334.62px;" width="10.5" height="7.5" viewBox="0 0 10.5 7.5"><path d="M0 0.5 L3.5 0.5 L4.5 1.6 L10.2 1.6 L10.2 7.2 L0 7.2 Z" fill="#e4e4e4"/><path d="M0 2.4 L10.2 2.4" stroke="#9a9a9a" stroke-width="0.5"/></svg>
<div class="t" style="left:1123.6px;top:335.32000000000005px;font-size:7.1px;color:#dcdcdc;letter-spacing:-0.14px">Weiches Licht</div>
<div class="a" style="left:1079px;top:363.65000000000003px;width:164px;height:0.7px;background:#4f4f4f;"></div>
<div class="a" style="left:1080px;top:349.44px;width:10.5px;height:10.5px;border:0.7px solid #585858"></div>
<svg class="a" style="left:1099.5px;top:351.84px;" width="4" height="7" viewBox="0 0 4 7"><path d="M0.6 0.5 L3 3.2 L0.6 6" stroke="#c0c0c0" stroke-width="0.8" fill="none"/></svg>
<svg class="a" style="left:1106.4px;top:352.03999999999996px;" width="10.5" height="7.5" viewBox="0 0 10.5 7.5"><path d="M0 0.5 L3.5 0.5 L4.5 1.6 L10.2 1.6 L10.2 7.2 L0 7.2 Z" fill="#e4e4e4"/><path d="M0 2.4 L10.2 2.4" stroke="#9a9a9a" stroke-width="0.5"/></svg>
<div class="t" style="left:1123.6px;top:352.74px;font-size:7.1px;color:#dcdcdc;letter-spacing:-0.14px">Ineinanderkopieren</div>
<div class="a" style="left:1079px;top:381.0700000000001px;width:164px;height:0.7px;background:#4f4f4f;"></div>
<div class="a" style="left:1080px;top:366.86px;width:10.5px;height:10.5px;border:0.7px solid #585858"></div>
<svg class="a" style="left:1099.5px;top:369.26000000000005px;" width="4" height="7" viewBox="0 0 4 7"><path d="M0.6 0.5 L3 3.2 L0.6 6" stroke="#c0c0c0" stroke-width="0.8" fill="none"/></svg>
<svg class="a" style="left:1106.4px;top:369.46000000000004px;" width="10.5" height="7.5" viewBox="0 0 10.5 7.5"><path d="M0 0.5 L3.5 0.5 L4.5 1.6 L10.2 1.6 L10.2 7.2 L0 7.2 Z" fill="#e4e4e4"/><path d="M0 2.4 L10.2 2.4" stroke="#9a9a9a" stroke-width="0.5"/></svg>
<div class="t" style="left:1123.6px;top:370.1600000000001px;font-size:7.1px;color:#dcdcdc;letter-spacing:-0.14px">Hellere Farbe</div>
<div class="a" style="left:1079px;top:398.49000000000007px;width:164px;height:0.7px;background:#4f4f4f;"></div>
<div class="a" style="left:1080px;top:384.28px;width:10.5px;height:10.5px;border:0.7px solid #585858"></div>
<svg class="a" style="left:1099.5px;top:386.68px;" width="4" height="7" viewBox="0 0 4 7"><path d="M0.6 0.5 L3 3.2 L0.6 6" stroke="#c0c0c0" stroke-width="0.8" fill="none"/></svg>
<svg class="a" style="left:1106.4px;top:386.88px;" width="10.5" height="7.5" viewBox="0 0 10.5 7.5"><path d="M0 0.5 L3.5 0.5 L4.5 1.6 L10.2 1.6 L10.2 7.2 L0 7.2 Z" fill="#e4e4e4"/><path d="M0 2.4 L10.2 2.4" stroke="#9a9a9a" stroke-width="0.5"/></svg>
<div class="t" style="left:1123.6px;top:387.58000000000004px;font-size:7.1px;color:#dcdcdc;letter-spacing:-0.14px">Linear abw.</div>
<div class="a" style="left:1079px;top:415.91px;width:164px;height:0.7px;background:#4f4f4f;"></div>
<div class="a" style="left:1080px;top:401.70px;width:10.5px;height:10.5px;border:0.7px solid #585858"></div>
<svg class="a" style="left:1099.5px;top:404.09999999999997px;" width="4" height="7" viewBox="0 0 4 7"><path d="M0.6 0.5 L3 3.2 L0.6 6" stroke="#c0c0c0" stroke-width="0.8" fill="none"/></svg>
<svg class="a" style="left:1106.4px;top:404.29999999999995px;" width="10.5" height="7.5" viewBox="0 0 10.5 7.5"><path d="M0 0.5 L3.5 0.5 L4.5 1.6 L10.2 1.6 L10.2 7.2 L0 7.2 Z" fill="#e4e4e4"/><path d="M0 2.4 L10.2 2.4" stroke="#9a9a9a" stroke-width="0.5"/></svg>
<div class="t" style="left:1123.6px;top:405.0px;font-size:7.1px;color:#dcdcdc;letter-spacing:-0.14px">Farbig abwedeln</div>
<div class="a" style="left:1079px;top:433.3300000000001px;width:164px;height:0.7px;background:#4f4f4f;"></div>
<div class="a" style="left:1080px;top:419.12px;width:10.5px;height:10.5px;border:0.7px solid #585858"></div>
<svg class="a" style="left:1099.5px;top:421.52000000000004px;" width="4" height="7" viewBox="0 0 4 7"><path d="M0.6 0.5 L3 3.2 L0.6 6" stroke="#c0c0c0" stroke-width="0.8" fill="none"/></svg>
<svg class="a" style="left:1106.4px;top:421.72px;" width="10.5" height="7.5" viewBox="0 0 10.5 7.5"><path d="M0 0.5 L3.5 0.5 L4.5 1.6 L10.2 1.6 L10.2 7.2 L0 7.2 Z" fill="#e4e4e4"/><path d="M0 2.4 L10.2 2.4" stroke="#9a9a9a" stroke-width="0.5"/></svg>
<div class="t" style="left:1123.6px;top:422.4200000000001px;font-size:7.1px;color:#dcdcdc;letter-spacing:-0.14px">Negativ multiplizieren</div>
<div class="a" style="left:1079px;top:450.75000000000006px;width:164px;height:0.7px;background:#4f4f4f;"></div>
<div class="a" style="left:1080px;top:436.54px;width:10.5px;height:10.5px;border:0.7px solid #585858"></div>
<svg class="a" style="left:1099.5px;top:438.94px;" width="4" height="7" viewBox="0 0 4 7"><path d="M0.6 0.5 L3 3.2 L0.6 6" stroke="#c0c0c0" stroke-width="0.8" fill="none"/></svg>
<svg class="a" style="left:1106.4px;top:439.14px;" width="10.5" height="7.5" viewBox="0 0 10.5 7.5"><path d="M0 0.5 L3.5 0.5 L4.5 1.6 L10.2 1.6 L10.2 7.2 L0 7.2 Z" fill="#e4e4e4"/><path d="M0 2.4 L10.2 2.4" stroke="#9a9a9a" stroke-width="0.5"/></svg>
<div class="t" style="left:1123.6px;top:439.84000000000003px;font-size:7.1px;color:#dcdcdc;letter-spacing:-0.14px">Aufhellen</div>
<div class="a" style="left:1079px;top:468.17000000000013px;width:164px;height:0.7px;background:#4f4f4f;"></div>
<div class="a" style="left:1080px;top:453.96px;width:10.5px;height:10.5px;border:0.7px solid #585858"></div>
<svg class="a" style="left:1099.5px;top:456.36000000000007px;" width="4" height="7" viewBox="0 0 4 7"><path d="M0.6 0.5 L3 3.2 L0.6 6" stroke="#c0c0c0" stroke-width="0.8" fill="none"/></svg>
<svg class="a" style="left:1106.4px;top:456.56000000000006px;" width="10.5" height="7.5" viewBox="0 0 10.5 7.5"><path d="M0 0.5 L3.5 0.5 L4.5 1.6 L10.2 1.6 L10.2 7.2 L0 7.2 Z" fill="#e4e4e4"/><path d="M0 2.4 L10.2 2.4" stroke="#9a9a9a" stroke-width="0.5"/></svg>
<div class="t" style="left:1123.6px;top:457.2600000000001px;font-size:7.1px;color:#dcdcdc;letter-spacing:-0.14px">Dunklere Farbe</div>
<div class="a" style="left:1079px;top:485.5900000000001px;width:164px;height:0.7px;background:#4f4f4f;"></div>
<div class="a" style="left:1080px;top:471.38px;width:10.5px;height:10.5px;border:0.7px solid #585858"></div>
<svg class="a" style="left:1099.5px;top:473.78000000000003px;" width="4" height="7" viewBox="0 0 4 7"><path d="M0.6 0.5 L3 3.2 L0.6 6" stroke="#c0c0c0" stroke-width="0.8" fill="none"/></svg>
<svg class="a" style="left:1106.4px;top:473.98px;" width="10.5" height="7.5" viewBox="0 0 10.5 7.5"><path d="M0 0.5 L3.5 0.5 L4.5 1.6 L10.2 1.6 L10.2 7.2 L0 7.2 Z" fill="#e4e4e4"/><path d="M0 2.4 L10.2 2.4" stroke="#9a9a9a" stroke-width="0.5"/></svg>
<div class="t" style="left:1123.6px;top:474.68000000000006px;font-size:7.1px;color:#dcdcdc;letter-spacing:-0.14px">Linear nachbelichten</div>
<div class="a" style="left:1079px;top:503.01000000000005px;width:164px;height:0.7px;background:#4f4f4f;"></div>
<div class="a" style="left:1080px;top:488.80px;width:10.5px;height:10.5px;border:0.7px solid #585858"></div>
<svg class="a" style="left:1099.5px;top:491.2px;" width="4" height="7" viewBox="0 0 4 7"><path d="M0.6 0.5 L3 3.2 L0.6 6" stroke="#c0c0c0" stroke-width="0.8" fill="none"/></svg>
<svg class="a" style="left:1106.4px;top:491.4px;" width="10.5" height="7.5" viewBox="0 0 10.5 7.5"><path d="M0 0.5 L3.5 0.5 L4.5 1.6 L10.2 1.6 L10.2 7.2 L0 7.2 Z" fill="#e4e4e4"/><path d="M0 2.4 L10.2 2.4" stroke="#9a9a9a" stroke-width="0.5"/></svg>
<div class="t" style="left:1123.6px;top:492.1px;font-size:7.1px;color:#dcdcdc;letter-spacing:-0.14px">Farbig nachbelichten</div>
<div class="a" style="left:1079px;top:520.4300000000001px;width:164px;height:0.7px;background:#4f4f4f;"></div>
<div class="a" style="left:1080px;top:506.22px;width:10.5px;height:10.5px;border:0.7px solid #585858"></div>
<svg class="a" style="left:1099.5px;top:508.62000000000006px;" width="4" height="7" viewBox="0 0 4 7"><path d="M0.6 0.5 L3 3.2 L0.6 6" stroke="#c0c0c0" stroke-width="0.8" fill="none"/></svg>
<svg class="a" style="left:1106.4px;top:508.82000000000005px;" width="10.5" height="7.5" viewBox="0 0 10.5 7.5"><path d="M0 0.5 L3.5 0.5 L4.5 1.6 L10.2 1.6 L10.2 7.2 L0 7.2 Z" fill="#e4e4e4"/><path d="M0 2.4 L10.2 2.4" stroke="#9a9a9a" stroke-width="0.5"/></svg>
<div class="t" style="left:1123.6px;top:509.5200000000001px;font-size:7.1px;color:#dcdcdc;letter-spacing:-0.14px">Multiplizieren</div>
<div class="a" style="left:1079px;top:537.8499999999999px;width:164px;height:0.7px;background:#4f4f4f;"></div>
<div class="a" style="left:1080px;top:523.64px;width:10.5px;height:10.5px;border:0.7px solid #585858"></div>
<svg class="a" style="left:1099.5px;top:526.0400000000001px;" width="4" height="7" viewBox="0 0 4 7"><path d="M0.6 0.5 L3 3.2 L0.6 6" stroke="#c0c0c0" stroke-width="0.8" fill="none"/></svg>
<svg class="a" style="left:1106.4px;top:526.24px;" width="10.5" height="7.5" viewBox="0 0 10.5 7.5"><path d="M0 0.5 L3.5 0.5 L4.5 1.6 L10.2 1.6 L10.2 7.2 L0 7.2 Z" fill="#e4e4e4"/><path d="M0 2.4 L10.2 2.4" stroke="#9a9a9a" stroke-width="0.5"/></svg>
<div class="t" style="left:1123.6px;top:526.94px;font-size:7.1px;color:#dcdcdc;letter-spacing:-0.14px">Abdunkeln</div>
<div class="a" style="left:1079px;top:555.2699999999999px;width:164px;height:0.7px;background:#4f4f4f;"></div>
<div class="a" style="left:1080px;top:541.06px;width:10.5px;height:10.5px;border:0.7px solid #585858"></div>
<svg class="a" style="left:1099.5px;top:543.46px;" width="4" height="7" viewBox="0 0 4 7"><path d="M0.6 0.5 L3 3.2 L0.6 6" stroke="#c0c0c0" stroke-width="0.8" fill="none"/></svg>
<svg class="a" style="left:1106.4px;top:543.66px;" width="10.5" height="7.5" viewBox="0 0 10.5 7.5"><path d="M0 0.5 L3.5 0.5 L4.5 1.6 L10.2 1.6 L10.2 7.2 L0 7.2 Z" fill="#e4e4e4"/><path d="M0 2.4 L10.2 2.4" stroke="#9a9a9a" stroke-width="0.5"/></svg>
<div class="t" style="left:1123.6px;top:544.36px;font-size:7.1px;color:#dcdcdc;letter-spacing:-0.14px">Sprenkel</div>
<div class="a" style="left:1096.5px;top:556.6px;width:147px;height:15.8px;background:#656565;"></div>
<svg class="a" style="left:1081.6px;top:562.6px;" width="9" height="6" viewBox="0 0 9 6"><path d="M0.3 3 C2.3 -0.3 6.7 -0.3 8.7 3 C6.7 6.3 2.3 6.3 0.3 3 Z" fill="#e4e4e4"/><circle cx="4.5" cy="3" r="1.5" fill="#454545"/></svg>
<svg class="a" style="left:1097.5px;top:563.1800000000001px;" width="6" height="4" viewBox="0 0 6 4"><path d="M0.5 0.5 L3 3 L5.5 0.5" stroke="#a8a8a8" stroke-width="0.8" fill="none"/></svg>
<svg class="a" style="left:1106.2px;top:561.1800000000001px;" width="10.5" height="7.5" viewBox="0 0 10.5 7.5"><path d="M0 0.5 L3.5 0.5 L4.5 1.6 L10.2 1.6 L10.2 7.2 L0 7.2 Z" fill="#d8d8d8"/><path d="M0.8 3 L10.2 3" stroke="#8a8a8a" stroke-width="0.6"/></svg>
<div class="t" style="left:1123.8px;top:562.7800000000001px;font-size:6.8px;color:#e0e0e0;">Normal</div>
<div class="a" style="left:1079px;top:573px;width:164px;height:0.7px;background:#505050;"></div>
<svg class="a" style="left:1081.6px;top:583.5px;" width="9" height="6" viewBox="0 0 9 6"><path d="M0.3 3 C2.3 -0.3 6.7 -0.3 8.7 3 C6.7 6.3 2.3 6.3 0.3 3 Z" fill="#e4e4e4"/><circle cx="4.5" cy="3" r="1.5" fill="#454545"/></svg>
<svg class="a" style="left:1109.7px;top:577.9px;" width="20.5" height="17" viewBox="0 0 20.5 17"><pattern id="ck1109577" width="4.4" height="4.4" patternUnits="userSpaceOnUse"><rect width="4.4" height="4.4" fill="#fff"/><rect width="2.2" height="2.2" fill="#cfcfcf"/><rect x="2.2" y="2.2" width="2.2" height="2.2" fill="#cfcfcf"/></pattern><rect width="20.5" height="17" fill="url(#ck1109577)"/><ellipse cx="12" cy="3.5" rx="6" ry="5.5" fill="#d8a0cc" opacity="0.8"/><rect x="11" y="8" width="9.5" height="9" fill="#4a4a4a"/><rect x="13" y="10" width="5.5" height="5" stroke="#e0e0e0" stroke-width="0.8" fill="none"/><rect x="12.3" y="9.3" width="1.4" height="1.4" fill="#e0e0e0"/><rect x="17.8" y="9.3" width="1.4" height="1.4" fill="#e0e0e0"/><rect x="12.3" y="14.3" width="1.4" height="1.4" fill="#e0e0e0"/><rect x="17.8" y="14.3" width="1.4" height="1.4" fill="#e0e0e0"/></svg>
<div class="t" style="left:1137px;top:583.6px;font-size:6.8px;color:#dcdcdc;">Ellipse 1 Kopie</div>
<div class="a" style="left:1079px;top:598px;width:164px;height:0.7px;background:#505050;"></div>
<svg class="a" style="left:1081.6px;top:608px;" width="9" height="6" viewBox="0 0 9 6"><path d="M0.3 3 C2.3 -0.3 6.7 -0.3 8.7 3 C6.7 6.3 2.3 6.3 0.3 3 Z" fill="#e4e4e4"/><circle cx="4.5" cy="3" r="1.5" fill="#454545"/></svg>
<svg class="a" style="left:1109.7px;top:602px;" width="20.5" height="17.5" viewBox="0 0 20.5 17.5"><pattern id="ck1109602" width="4.4" height="4.4" patternUnits="userSpaceOnUse"><rect width="4.4" height="4.4" fill="#fff"/><rect width="2.2" height="2.2" fill="#cfcfcf"/><rect x="2.2" y="2.2" width="2.2" height="2.2" fill="#cfcfcf"/></pattern><rect width="20.5" height="17.5" fill="url(#ck1109602)"/><ellipse cx="9" cy="9.8" rx="3.9" ry="4" fill="#e0102a"/><rect x="11" y="8.5" width="9.5" height="9" fill="#4a4a4a"/><rect x="13" y="10.5" width="5.5" height="5" stroke="#e0e0e0" stroke-width="0.8" fill="none"/><rect x="12.3" y="9.8" width="1.4" height="1.4" fill="#e0e0e0"/><rect x="17.8" y="9.8" width="1.4" height="1.4" fill="#e0e0e0"/><rect x="12.3" y="14.8" width="1.4" height="1.4" fill="#e0e0e0"/><rect x="17.8" y="14.8" width="1.4" height="1.4" fill="#e0e0e0"/></svg>
<div class="t" style="left:1137px;top:608px;font-size:6.8px;color:#dcdcdc;">Ellipse 1</div>
<div class="a" style="left:1079px;top:622.5px;width:164px;height:0.7px;background:#505050;"></div>
<svg class="a" style="left:1098.8px;top:626px;" width="20.8" height="18" viewBox="0 0 20.8 18"><defs><linearGradient id="gv" x1="0" y1="0" x2="0" y2="1"><stop offset="0" stop-color="#f4f4f4"/><stop offset="0.72" stop-color="#555"/><stop offset="0.72" stop-color="#111"/><stop offset="1" stop-color="#000"/></linearGradient></defs><rect width="20.8" height="18" fill="url(#gv)"/><rect x="0" y="13.5" width="20.8" height="1" fill="#000"/></svg>
<div class="t" style="left:1126px;top:631.8px;font-size:6.8px;color:#dcdcdc;">verlauf Kopie 5</div>
<div class="a" style="left:1079px;top:647px;width:164px;height:0.7px;background:#505050;"></div>
<div class="a" style="left:1099px;top:651px;width:20px;height:21px;background:#000000;"></div>
<div class="a" style="left:1099px;top:667px;width:20px;height:5px;background:#cfcfcf;"></div>
<div class="a" style="left:1108px;top:669px;width:2px;height:1.5px;background:#000;"></div>
<svg class="a" style="left:1122px;top:655.5px;" width="5" height="10" viewBox="0 0 5 10"><rect x="0.5" y="0.5" width="4" height="4" rx="1.5" stroke="#d0d0d0" stroke-width="0.8" fill="none"/><rect x="0.5" y="5" width="4" height="4" rx="1.5" stroke="#d0d0d0" stroke-width="0.8" fill="none"/></svg>
<div class="a" style="left:1131px;top:653px;width:20.5px;height:17px;background:#ffffff;"></div>
<div class="t" style="left:1157px;top:658.8px;font-size:6.8px;color:#dcdcdc;">Farbfüllung 1</div>
<div class="t" style="left:1226px;top:655.5px;font-size:9.5px;color:#d0d0d0;font-style:italic;font-family:Liberation Serif">fx</div>
<svg class="a" style="left:1237.5px;top:659px;" width="5" height="3" viewBox="0 0 5 3"><path d="M0.5 2.5 L2.5 0.5 L4.5 2.5" stroke="#8a8a8a" stroke-width="0.8" fill="none"/></svg>
<div class="a" style="left:1238px;top:648px;width:4px;height:28px;background:#4d4d4d;"></div>
<div class="t" style="left:1121px;top:678.3px;font-size:6.5px;color:#d8d8d8;">Effekte</div>
<svg class="a" style="left:1121px;top:691.5px;" width="8" height="5" viewBox="0 0 8 5"><path d="M0.5 2.5 C2 0 6 0 7.5 2.5 C6 5 2 5 0.5 2.5 Z" stroke="#8a8a8a" stroke-width="0.8" fill="none"/></svg>
<div class="t" style="left:1133px;top:691.8px;font-size:6.5px;color:#d8d8d8;">Verlaufsüberlagerung</div>
<div class="a" style="left:1245px;top:139px;width:8px;height:564px;background:#4e4e4e;"></div>
<div class="a" style="left:1245.5px;top:229px;width:7px;height:461px;background:#6a6a6a;"></div>
<svg class="a" style="left:1246px;top:136px;" width="6" height="4" viewBox="0 0 6 4"><path d="M0.5 3.5 L3 1 L5.5 3.5" stroke="#777" stroke-width="0.8" fill="none"/></svg>
<div class="a" style="left:1076px;top:702px;width:179px;height:1px;background:#4a4a4a;"></div>
<svg class="a" style="left:1121px;top:708px;" width="9" height="6" viewBox="0 0 9 6"><rect x="0.5" y="1" width="4" height="3.5" rx="1.7" stroke="#7a7a7a" stroke-width="0.9" fill="none"/><rect x="4.5" y="1" width="4" height="3.5" rx="1.7" stroke="#7a7a7a" stroke-width="0.9" fill="none"/></svg>
<div class="t" style="left:1137.5px;top:706.5px;font-size:7.6px;color:#d8d8d8;font-style:italic;font-family:Liberation Serif">fx</div>
<svg class="a" style="left:1155px;top:707px;" width="9" height="8" viewBox="0 0 9 8"><rect x="0.5" y="0.5" width="8" height="7" fill="#d8d8d8"/><circle cx="4.5" cy="4" r="2" fill="#535353"/></svg>
<svg class="a" style="left:1172.5px;top:707px;" width="8" height="9" viewBox="0 0 8 9"><circle cx="4" cy="4" r="3.5" fill="#d8d8d8"/><path d="M6.5 1.5 A3.5 3.5 0 0 1 1.5 6.5 Z" fill="#535353"/></svg>
<svg class="a" style="left:1190.5px;top:707px;" width="10" height="8" viewBox="0 0 10 8"><path d="M0.5 0.5 L4 0.5 L5 1.5 L9.5 1.5 L9.5 7.5 L0.5 7.5 Z" fill="#d8d8d8"/></svg>
<svg class="a" style="left:1210px;top:706.5px;" width="9" height="9" viewBox="0 0 9 9"><rect x="0.5" y="0.5" width="8" height="8" stroke="#d8d8d8" stroke-width="0.9" fill="none"/><path d="M4.5 2.5 L4.5 6.5 M2.5 4.5 L6.5 4.5" stroke="#d8d8d8" stroke-width="0.9"/></svg>
<svg class="a" style="left:1227.5px;top:706.5px;" width="8" height="9" viewBox="0 0 8 9"><rect x="0.5" y="0.3" width="7" height="1.2" fill="#d8d8d8"/><path d="M1 2 L7 2 L6.3 8.7 L1.7 8.7 Z" fill="#d8d8d8"/></svg>
<svg class="a" style="left:1085px;top:635px;" width="13" height="15" viewBox="0 0 13 15"><g transform="scale(0.95)"><path d="M3.5 1.2 C3.5 0.2 5 0.2 5 1.2 L5 6 L5.3 4.5 C5.5 3.8 6.7 3.8 6.8 4.6 L6.8 6.3 L7.1 5.1 C7.4 4.4 8.5 4.5 8.5 5.3 L8.5 6.8 L8.8 6 C9.1 5.4 10.1 5.5 10.1 6.3 L10 9.5 C9.8 11.5 8.6 13 6.5 13 L5 13 C3.5 13 2.5 12 1.5 10.5 L0.4 8.3 C0 7.6 0.9 6.9 1.6 7.5 L3.5 9.2 Z" fill="#ffffff" stroke="#222" stroke-width="0.6"/></g></svg>
</div></body></html>
